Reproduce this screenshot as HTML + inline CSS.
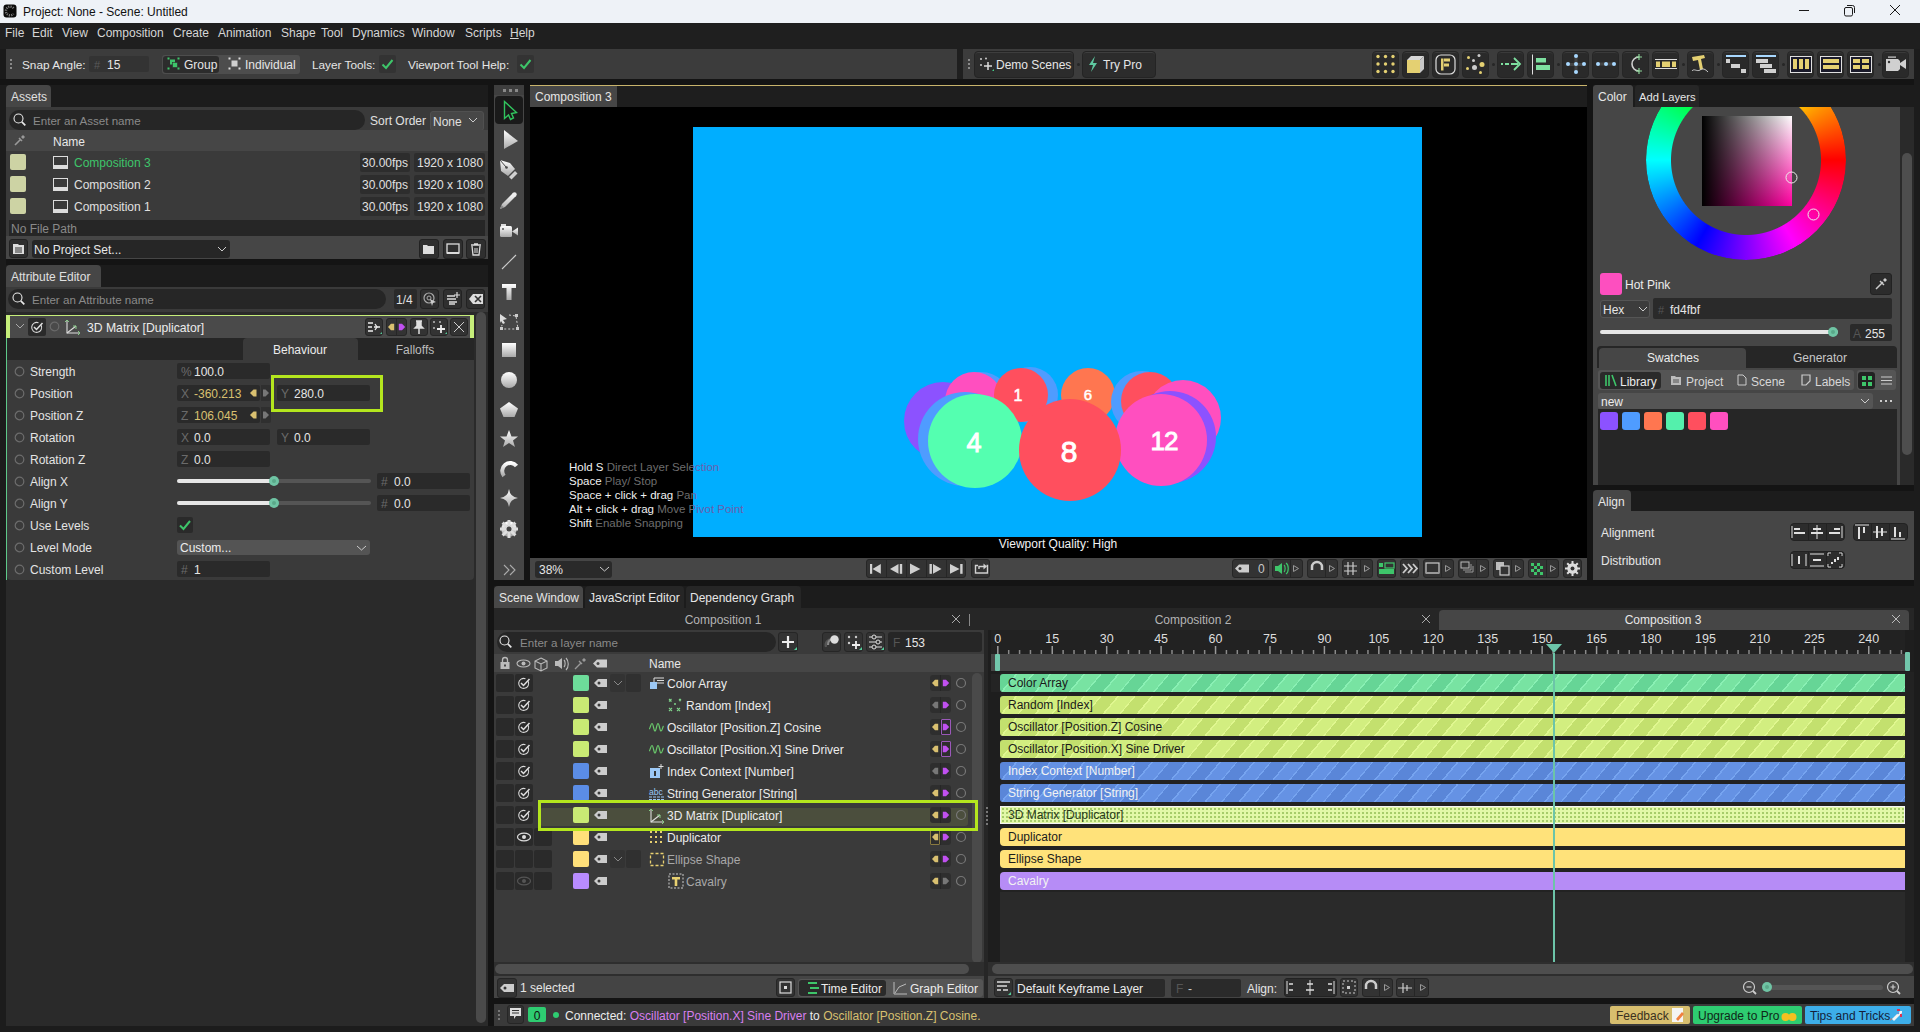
<!DOCTYPE html><html><head><meta charset="utf-8"><style>
html,body{margin:0;padding:0;width:1920px;height:1032px;overflow:hidden;background:#1c1c1c;}
body{position:relative;font-family:"Liberation Sans",sans-serif;font-size:12px;}
.a{position:absolute;}
.t{white-space:pre;}
svg.a{overflow:visible;}
</style></head><body>
<div class="a" style="left:0px;top:0px;width:1920px;height:1032px;background:#1c1c1c;"></div>
<div class="a" style="left:0px;top:0px;width:1920px;height:23px;background:#eef2f7;"></div>
<svg class="a" style="left:3px;top:4px;" width="14" height="14" viewBox="0 0 14 14"><rect x="0.5" y="0.5" width="13" height="13" rx="3" fill="#0a0a0a"/><path d="M10.5 4.2A4.3 4.3 0 1 0 10.5 9.8" stroke="#777" stroke-width="2.4" stroke-dasharray="1.2 1" fill="none"/></svg>
<div class="a t" style="left:23px;top:3.5px;height:16px;line-height:16px;font-size:12px;color:#111;">Project: None - Scene: Untitled</div>
<div class="a" style="left:1799px;top:10px;width:10px;height:1px;background:#1a1a1a;"></div>
<svg class="a" style="left:1843px;top:4px;" width="13" height="13" viewBox="0 0 13 13"><rect x="1.5" y="3.5" width="8" height="8.5" rx="1.5" fill="none" stroke="#1a1a1a" stroke-width="1"/><path d="M4 1.5H9.5A2 2 0 0 1 11.5 3.5V9" fill="none" stroke="#1a1a1a" stroke-width="1"/></svg>
<svg class="a" style="left:1889px;top:4px;" width="12" height="12" viewBox="0 0 12 12"><path d="M1 1L11 11M11 1L1 11" stroke="#1a1a1a" stroke-width="1"/></svg>
<div class="a" style="left:0px;top:23px;width:1920px;height:26px;background:#1f1f1f;"></div>
<div class="a t" style="left:5px;top:25px;height:16px;line-height:16px;font-size:12px;color:#d6d6d6;">File</div>
<div class="a t" style="left:32px;top:25px;height:16px;line-height:16px;font-size:12px;color:#d6d6d6;">Edit</div>
<div class="a t" style="left:62px;top:25px;height:16px;line-height:16px;font-size:12px;color:#d6d6d6;">View</div>
<div class="a t" style="left:97px;top:25px;height:16px;line-height:16px;font-size:12px;color:#d6d6d6;">Composition</div>
<div class="a t" style="left:173px;top:25px;height:16px;line-height:16px;font-size:12px;color:#d6d6d6;">Create</div>
<div class="a t" style="left:218px;top:25px;height:16px;line-height:16px;font-size:12px;color:#d6d6d6;">Animation</div>
<div class="a t" style="left:281px;top:25px;height:16px;line-height:16px;font-size:12px;color:#d6d6d6;">Shape</div>
<div class="a t" style="left:321px;top:25px;height:16px;line-height:16px;font-size:12px;color:#d6d6d6;">Tool</div>
<div class="a t" style="left:352px;top:25px;height:16px;line-height:16px;font-size:12px;color:#d6d6d6;">Dynamics</div>
<div class="a t" style="left:412px;top:25px;height:16px;line-height:16px;font-size:12px;color:#d6d6d6;">Window</div>
<div class="a t" style="left:465px;top:25px;height:16px;line-height:16px;font-size:12px;color:#d6d6d6;">Scripts</div>
<div class="a t" style="left:510px;top:25px;height:16px;line-height:16px;font-size:12px;color:#d6d6d6;"><u>H</u>elp</div>
<div class="a" style="left:0px;top:49px;width:6px;height:31px;background:#1a1a1a;"></div>
<div class="a" style="left:6px;top:49px;width:951px;height:30px;background:#3c3c3c;"></div>
<div class="a" style="left:957px;top:49px;width:6px;height:30px;background:#1f1f1f;"></div>
<div class="a" style="left:963px;top:49px;width:951px;height:30px;background:#3c3c3c;"></div>
<div class="a" style="left:0px;top:79px;width:1920px;height:6px;background:#141414;"></div>
<div class="a" style="left:10px;top:59px;width:2px;height:2px;background:#8a8a8a;"></div>
<div class="a" style="left:968px;top:59px;width:2px;height:2px;background:#8a8a8a;"></div>
<div class="a" style="left:10px;top:63px;width:2px;height:2px;background:#8a8a8a;"></div>
<div class="a" style="left:968px;top:63px;width:2px;height:2px;background:#8a8a8a;"></div>
<div class="a" style="left:10px;top:67px;width:2px;height:2px;background:#8a8a8a;"></div>
<div class="a" style="left:968px;top:67px;width:2px;height:2px;background:#8a8a8a;"></div>
<div class="a t" style="left:22px;top:57px;height:16px;line-height:16px;font-size:11.8px;color:#e6e6e6;">Snap Angle:</div>
<div class="a" style="left:89px;top:56px;width:60px;height:16px;background:#333333;border-radius:2px;"></div>
<div class="a t" style="left:94px;top:57px;height:16px;line-height:16px;font-size:11px;color:#5a5a5a;">#</div>
<div class="a t" style="left:107px;top:57px;height:16px;line-height:16px;font-size:12px;color:#e6e6e6;">15</div>
<div class="a" style="left:162px;top:55px;width:138px;height:19px;background:#4d4d4d;border-radius:3px;"></div>
<div class="a" style="left:163px;top:56px;width:56px;height:17px;background:#2c2c2c;border-radius:3px;"></div>
<svg class="a" style="left:167px;top:57px;" width="14" height="14" viewBox="0 0 14 14"><path d="M0.5 0.5h2v2h-2zM10.5 0.5h2v2h-2zM0.5 10.5h2v2h-2zM10.5 10.5h2v2h-2z" fill="#3ec56a"/><rect x="3" y="2.5" width="5" height="5" fill="#3ec56a"/><rect x="5.5" y="5.5" width="5" height="5" fill="#3ec56a" stroke="#2c2c2c" stroke-width="0.6"/></svg>
<div class="a t" style="left:184px;top:57px;height:16px;line-height:16px;font-size:12px;color:#e6e6e6;">Group</div>
<svg class="a" style="left:228px;top:57px;" width="14" height="14" viewBox="0 0 14 14"><path d="M0.5 0.5h2v2h-2zM10.5 0.5h2v2h-2zM0.5 10.5h2v2h-2zM10.5 10.5h2v2h-2z" fill="#ddd"/><rect x="3.5" y="3.5" width="6" height="6" fill="#d0d0d0"/></svg>
<div class="a t" style="left:245px;top:57px;height:16px;line-height:16px;font-size:12px;color:#e6e6e6;">Individual</div>
<div class="a t" style="left:312px;top:57px;height:16px;line-height:16px;font-size:11.8px;color:#e6e6e6;">Layer Tools:</div>
<div class="a" style="left:379px;top:55px;width:17px;height:18px;background:#333;border-radius:2px;"></div>
<svg class="a" style="left:380px;top:57px;" width="15" height="14" viewBox="0 0 15 14"><path d="M2.5 7.5L6 11L12.5 3" stroke="#3ec56a" stroke-width="2" fill="none"/></svg>
<div class="a t" style="left:408px;top:57px;height:16px;line-height:16px;font-size:11.8px;color:#e6e6e6;">Viewport Tool Help:</div>
<div class="a" style="left:517px;top:55px;width:17px;height:18px;background:#333;border-radius:2px;"></div>
<svg class="a" style="left:518px;top:57px;" width="15" height="14" viewBox="0 0 15 14"><path d="M2.5 7.5L6 11L12.5 3" stroke="#3ec56a" stroke-width="2" fill="none"/></svg>
<div class="a" style="left:974px;top:51px;width:100px;height:27px;background:#2c2c2c;border-radius:4px;border:1px solid #242424;box-sizing:border-box;box-shadow:inset 0 1px 0 #3e3e3e;"></div>
<svg class="a" style="left:979px;top:57px;" width="16" height="16" viewBox="0 0 16 16"><circle cx="2" cy="2" r="1" fill="#ccc"/><circle cx="7" cy="1.5" r="1" fill="#ccc"/><circle cx="2" cy="8" r="1" fill="#ccc"/><path d="M9 5v8M5 9h8" stroke="#ddd" stroke-width="1.5"/><path d="M13 14l2-2v2z" fill="#4c8"/></svg>
<div class="a t" style="left:996px;top:57px;height:16px;line-height:16px;font-size:12px;color:#e6e6e6;">Demo Scenes</div>
<div class="a" style="left:1082px;top:51px;width:74px;height:27px;background:#2c2c2c;border-radius:4px;border:1px solid #242424;box-sizing:border-box;box-shadow:inset 0 1px 0 #3e3e3e;"></div>
<div class="a" style="left:1077px;top:63px;width:3px;height:3px;background:#262626;border-radius:50%;"></div>
<svg class="a" style="left:1088px;top:56px;" width="10" height="16" viewBox="0 0 10 16"><path d="M7 0L1 9h4l-2 7 6-9H5z" fill="#5ec8a0"/></svg>
<div class="a t" style="left:1103px;top:57px;height:16px;line-height:16px;font-size:12px;color:#e6e6e6;">Try Pro</div>
<div class="a" style="left:1372px;top:51px;width:27px;height:27px;background:#2a2a2a;border-radius:4px;border:1px solid #262626;box-sizing:border-box;box-shadow:inset 0 1px 0 #3a3a3a;"></div>
<svg class="a" style="left:1372px;top:51px;" width="27" height="27" viewBox="0 0 27 27"><circle cx="6.0" cy="5.5" r="1.7" fill="#e4d072"/><circle cx="6.0" cy="13.0" r="1.7" fill="#e4d072"/><circle cx="6.0" cy="20.5" r="1.7" fill="#e4d072"/><circle cx="13.5" cy="5.5" r="1.7" fill="#e4d072"/><circle cx="13.5" cy="13.0" r="1.7" fill="#e4d072"/><circle cx="13.5" cy="20.5" r="1.7" fill="#e4d072"/><circle cx="21.0" cy="5.5" r="1.7" fill="#e4d072"/><circle cx="21.0" cy="13.0" r="1.7" fill="#e4d072"/><circle cx="21.0" cy="20.5" r="1.7" fill="#e4d072"/></svg>
<div class="a" style="left:1402px;top:51px;width:27px;height:27px;background:#2a2a2a;border-radius:4px;border:1px solid #262626;box-sizing:border-box;box-shadow:inset 0 1px 0 #3a3a3a;"></div>
<svg class="a" style="left:1402px;top:51px;" width="27" height="27" viewBox="0 0 27 27"><path d="M5 9l4-4h13l-4 4z" fill="#d8d8d8"/><path d="M18 9l4-4v13l-4 4z" fill="#c8c8c8"/><rect x="5" y="9" width="13" height="13" fill="#e4d072"/></svg>
<div class="a" style="left:1432px;top:51px;width:27px;height:27px;background:#2a2a2a;border-radius:4px;border:1px solid #262626;box-sizing:border-box;box-shadow:inset 0 1px 0 #3a3a3a;"></div>
<svg class="a" style="left:1432px;top:51px;" width="27" height="27" viewBox="0 0 27 27"><rect x="4" y="4" width="19" height="19" rx="5" fill="none" stroke="#dedede" stroke-width="1.2"/><path d="M9 7.5h2.5v12H9z M12 7.5h6v3h-6z M12 12.5h5v3h-5z" fill="#e4d072"/></svg>
<div class="a" style="left:1462px;top:51px;width:27px;height:27px;background:#2a2a2a;border-radius:4px;border:1px solid #262626;box-sizing:border-box;box-shadow:inset 0 1px 0 #3a3a3a;"></div>
<svg class="a" style="left:1462px;top:51px;" width="27" height="27" viewBox="0 0 27 27"><circle cx="6.5" cy="6.5" r="1.5" fill="#e4d072"/><circle cx="17" cy="4.5" r="1.5" fill="#ccc"/><circle cx="11.5" cy="9.5" r="1.5" fill="#ccc"/><circle cx="20" cy="13.5" r="2.5" fill="#e4d072"/><circle cx="5.5" cy="17.5" r="1.5" fill="#e4d072"/><circle cx="12.5" cy="16.5" r="2.5" fill="#ccc"/><circle cx="18.5" cy="21.5" r="1.5" fill="#e4d072"/></svg>
<div class="a" style="left:1492px;top:63px;width:3px;height:3px;background:#262626;border-radius:50%;"></div>
<div class="a" style="left:1497px;top:51px;width:27px;height:27px;background:#2a2a2a;border-radius:4px;border:1px solid #262626;box-sizing:border-box;box-shadow:inset 0 1px 0 #3a3a3a;"></div>
<svg class="a" style="left:1497px;top:51px;" width="27" height="27" viewBox="0 0 27 27"><path d="M4 13h2M8 13h4M14 13h7" stroke="#7ee0a0" stroke-width="1.8"/><path d="M17 7l6 6-6 6" stroke="#7ee0a0" stroke-width="1.8" fill="none"/></svg>
<div class="a" style="left:1527px;top:51px;width:27px;height:27px;background:#2a2a2a;border-radius:4px;border:1px solid #262626;box-sizing:border-box;box-shadow:inset 0 1px 0 #3a3a3a;"></div>
<svg class="a" style="left:1527px;top:51px;" width="27" height="27" viewBox="0 0 27 27"><path d="M5.5 3.5v20" stroke="#e0e0e0" stroke-width="1"/><rect x="9" y="7" width="10" height="4.5" fill="#7ee0a0"/><rect x="9" y="14" width="14" height="5" fill="#7ee0a0"/></svg>
<div class="a" style="left:1557px;top:63px;width:3px;height:3px;background:#262626;border-radius:50%;"></div>
<div class="a" style="left:1562px;top:51px;width:27px;height:27px;background:#2a2a2a;border-radius:4px;border:1px solid #262626;box-sizing:border-box;box-shadow:inset 0 1px 0 #3a3a3a;"></div>
<svg class="a" style="left:1562px;top:51px;" width="27" height="27" viewBox="0 0 27 27"><path d="M14 5v17M5.5 13.5h17" stroke="#444" stroke-width="3"/><circle cx="14" cy="5" r="2" fill="#a8d8ff"/><circle cx="6" cy="13" r="2" fill="#a8d8ff"/><circle cx="14" cy="13" r="2" fill="#a8d8ff"/><circle cx="22" cy="13" r="2" fill="#a8d8ff"/><circle cx="14" cy="21" r="2" fill="#a8d8ff"/></svg>
<div class="a" style="left:1592px;top:51px;width:27px;height:27px;background:#2a2a2a;border-radius:4px;border:1px solid #262626;box-sizing:border-box;box-shadow:inset 0 1px 0 #3a3a3a;"></div>
<svg class="a" style="left:1592px;top:51px;" width="27" height="27" viewBox="0 0 27 27"><path d="M6 13h16" stroke="#444" stroke-width="3"/><circle cx="6" cy="13" r="2" fill="#a8d8ff"/><circle cx="14" cy="13" r="2" fill="#a8d8ff"/><circle cx="22" cy="13" r="2" fill="#a8d8ff"/></svg>
<div class="a" style="left:1622px;top:51px;width:27px;height:27px;background:#2a2a2a;border-radius:4px;border:1px solid #262626;box-sizing:border-box;box-shadow:inset 0 1px 0 #3a3a3a;"></div>
<svg class="a" style="left:1622px;top:51px;" width="27" height="27" viewBox="0 0 27 27"><path d="M17 6a7 7 0 0 0 0 14" stroke="#d0d0d0" stroke-width="1.6" fill="none"/><path d="M17 3v6M14 6h6M17 17v6M14 20h6" stroke="#8ed89a" stroke-width="1.2"/></svg>
<div class="a" style="left:1652px;top:51px;width:27px;height:27px;background:#2a2a2a;border-radius:4px;border:1px solid #262626;box-sizing:border-box;box-shadow:inset 0 1px 0 #3a3a3a;"></div>
<svg class="a" style="left:1652px;top:51px;" width="27" height="27" viewBox="0 0 27 27"><path d="M3 8.5h22M3 17.5h22" stroke="#dedede" stroke-width="1"/><rect x="4" y="10.5" width="4" height="5.5" fill="#e4d072"/><rect x="10" y="10.5" width="8" height="5.5" fill="#e4d072"/><rect x="20" y="10.5" width="4" height="5.5" fill="#e4d072"/></svg>
<div class="a" style="left:1682px;top:63px;width:3px;height:3px;background:#262626;border-radius:50%;"></div>
<div class="a" style="left:1687px;top:51px;width:27px;height:27px;background:#2a2a2a;border-radius:4px;border:1px solid #262626;box-sizing:border-box;box-shadow:inset 0 1px 0 #3a3a3a;"></div>
<svg class="a" style="left:1687px;top:51px;" width="27" height="27" viewBox="0 0 27 27"><path d="M5 6l12-2 1 3-4 1 2 10-3 1-2-10-5 1z" fill="#e4d072"/><path d="M5 20c2-3 5 1 8-1s5-1 8 2" stroke="#ccc" stroke-width="1" fill="none"/></svg>
<div class="a" style="left:1717px;top:63px;width:3px;height:3px;background:#262626;border-radius:50%;"></div>
<div class="a" style="left:1722px;top:51px;width:27px;height:27px;background:#2a2a2a;border-radius:4px;border:1px solid #262626;box-sizing:border-box;box-shadow:inset 0 1px 0 #3a3a3a;"></div>
<svg class="a" style="left:1722px;top:51px;" width="27" height="27" viewBox="0 0 27 27"><rect x="4" y="4" width="20" height="2" fill="#a8d8ff"/><rect x="4" y="8" width="4" height="4" fill="#d0d0d0"/><rect x="9" y="13" width="9" height="4" fill="#d0d0d0"/><rect x="19" y="18" width="5" height="4" fill="#d0d0d0"/></svg>
<div class="a" style="left:1752px;top:51px;width:27px;height:27px;background:#2a2a2a;border-radius:4px;border:1px solid #262626;box-sizing:border-box;box-shadow:inset 0 1px 0 #3a3a3a;"></div>
<svg class="a" style="left:1752px;top:51px;" width="27" height="27" viewBox="0 0 27 27"><rect x="4" y="4" width="20" height="2" fill="#a8d8ff"/><rect x="4" y="8" width="12" height="4" fill="#d0d0d0"/><rect x="8" y="13" width="12" height="4" fill="#d0d0d0"/><rect x="12" y="18" width="12" height="4" fill="#d0d0d0"/></svg>
<div class="a" style="left:1782px;top:63px;width:3px;height:3px;background:#262626;border-radius:50%;"></div>
<div class="a" style="left:1787px;top:51px;width:27px;height:27px;background:#2a2a2a;border-radius:4px;border:1px solid #262626;box-sizing:border-box;box-shadow:inset 0 1px 0 #3a3a3a;"></div>
<svg class="a" style="left:1787px;top:51px;" width="27" height="27" viewBox="0 0 27 27"><rect x="3.5" y="5.5" width="21" height="16" fill="#1a1a2a" stroke="#e0e0e0" stroke-width="1"/><rect x="6" y="8" width="4" height="10" fill="#e4d072"/><rect x="12" y="8" width="4" height="10" fill="#e4d072"/><rect x="18" y="8" width="4" height="10" fill="#e4d072"/></svg>
<div class="a" style="left:1817px;top:51px;width:27px;height:27px;background:#2a2a2a;border-radius:4px;border:1px solid #262626;box-sizing:border-box;box-shadow:inset 0 1px 0 #3a3a3a;"></div>
<svg class="a" style="left:1817px;top:51px;" width="27" height="27" viewBox="0 0 27 27"><rect x="3.5" y="5.5" width="21" height="16" fill="#1a1a2a" stroke="#e0e0e0" stroke-width="1"/><rect x="6" y="8" width="16" height="4" fill="#e4d072"/><rect x="6" y="14" width="16" height="4" fill="#e4d072"/></svg>
<div class="a" style="left:1847px;top:51px;width:27px;height:27px;background:#2a2a2a;border-radius:4px;border:1px solid #262626;box-sizing:border-box;box-shadow:inset 0 1px 0 #3a3a3a;"></div>
<svg class="a" style="left:1847px;top:51px;" width="27" height="27" viewBox="0 0 27 27"><rect x="3.5" y="5.5" width="21" height="16" fill="#1a1a2a" stroke="#e0e0e0" stroke-width="1"/><rect x="6" y="8" width="7" height="4" fill="#e4d072"/><rect x="15" y="8" width="7" height="4" fill="#e4d072"/><rect x="6" y="14" width="7" height="4" fill="#e4d072"/><rect x="15" y="14" width="7" height="4" fill="#e4d072"/></svg>
<div class="a" style="left:1878px;top:63px;width:3px;height:3px;background:#262626;border-radius:50%;"></div>
<div class="a" style="left:1882px;top:51px;width:27px;height:27px;background:#2a2a2a;border-radius:4px;border:1px solid #262626;box-sizing:border-box;box-shadow:inset 0 1px 0 #3a3a3a;"></div>
<svg class="a" style="left:1882px;top:51px;" width="27" height="27" viewBox="0 0 27 27"><path d="M4 8h12l2 2v8l-2 2H4z" fill="#d0d0d0"/><path d="M18 12l6-4v10l-6-4z" fill="#d0d0d0"/><rect x="6" y="5.5" width="8" height="1.2" fill="#d0d0d0"/><circle cx="7" cy="11" r="1.2" fill="#333"/></svg>
<div class="a" style="left:0px;top:85px;width:6px;height:947px;background:#1c1c1c;"></div>
<div class="a" style="left:6px;top:85px;width:482px;height:22px;background:#1c1c1c;"></div>
<div class="a" style="left:6px;top:85px;width:45px;height:22px;background:#464646;border-radius:4px 4px 0 0;"></div>
<div class="a t" style="left:11px;top:89px;height:16px;line-height:16px;font-size:12px;color:#e0e0e0;">Assets</div>
<div class="a" style="left:6px;top:107px;width:482px;height:152px;background:#3a3a3a;"></div>
<div class="a" style="left:9px;top:110px;width:356px;height:20px;background:#262626;border-radius:10px;"></div>
<svg class="a" style="left:13px;top:113px;" width="14" height="14" viewBox="0 0 14 14"><circle cx="5.5" cy="5.5" r="4.5" fill="none" stroke="#e8e8e8" stroke-width="1.1"/><path d="M8.8 8.8l3.5 3.5" stroke="#e8e8e8" stroke-width="1.7"/></svg>
<div class="a t" style="left:33px;top:113px;height:16px;line-height:16px;font-size:11.6px;color:#8a8a8a;">Enter an Asset name</div>
<div class="a t" style="left:370px;top:113px;height:16px;line-height:16px;font-size:12px;color:#e0e0e0;">Sort Order</div>
<div class="a" style="left:430px;top:111px;width:54px;height:20px;background:#474747;border-radius:3px;border:1px solid #505050;box-sizing:border-box;"></div>
<div class="a t" style="left:433px;top:114px;height:16px;line-height:16px;font-size:12px;color:#e0e0e0;">None</div>
<svg class="a" style="left:468px;top:117px;" width="10" height="6" viewBox="0 0 10 6"><path d="M1 1l4 4 4-4" stroke="#ccc" fill="none" stroke-width="1"/></svg>
<div class="a" style="left:6px;top:130px;width:482px;height:21px;background:#464646;"></div>
<svg class="a" style="left:13px;top:134px;" width="13" height="13" viewBox="0 0 13 13"><path d="M2 11l6-6M6 4l3 3" stroke="#999" stroke-width="1.6"/><path d="M8 3l2-2 2 2-2 2z" fill="#999"/></svg>
<div class="a t" style="left:53px;top:134px;height:16px;line-height:16px;font-size:12px;color:#e8e8e8;">Name</div>
<div class="a" style="left:10px;top:154px;width:16px;height:16px;background:#cdd3a4;border-radius:2px;"></div>
<svg class="a" style="left:53px;top:156px;" width="15" height="13" viewBox="0 0 15 13"><rect x="0.5" y="0.5" width="14" height="9" fill="none" stroke="#ddd"/><rect x="0" y="10" width="15" height="3" fill="#ddd"/></svg>
<div class="a t" style="left:74px;top:155px;height:16px;line-height:16px;font-size:12px;color:#3ec56a;">Composition 3</div>
<div class="a" style="left:360px;top:153px;width:50px;height:19px;background:#2d2d2d;border-radius:2px;"></div>
<div class="a t" style="left:362px;top:155px;height:16px;line-height:16px;font-size:12px;color:#e0e0e0;">30.00fps</div>
<div class="a" style="left:414px;top:153px;width:71px;height:19px;background:#2d2d2d;border-radius:2px;"></div>
<div class="a t" style="left:417px;top:155px;height:16px;line-height:16px;font-size:12px;color:#e0e0e0;">1920 x 1080</div>
<div class="a" style="left:10px;top:176px;width:16px;height:16px;background:#cdd3a4;border-radius:2px;"></div>
<svg class="a" style="left:53px;top:178px;" width="15" height="13" viewBox="0 0 15 13"><rect x="0.5" y="0.5" width="14" height="9" fill="none" stroke="#ddd"/><rect x="0" y="10" width="15" height="3" fill="#ddd"/></svg>
<div class="a t" style="left:74px;top:177px;height:16px;line-height:16px;font-size:12px;color:#e0e0e0;">Composition 2</div>
<div class="a" style="left:360px;top:175px;width:50px;height:19px;background:#2d2d2d;border-radius:2px;"></div>
<div class="a t" style="left:362px;top:177px;height:16px;line-height:16px;font-size:12px;color:#e0e0e0;">30.00fps</div>
<div class="a" style="left:414px;top:175px;width:71px;height:19px;background:#2d2d2d;border-radius:2px;"></div>
<div class="a t" style="left:417px;top:177px;height:16px;line-height:16px;font-size:12px;color:#e0e0e0;">1920 x 1080</div>
<div class="a" style="left:10px;top:198px;width:16px;height:16px;background:#cdd3a4;border-radius:2px;"></div>
<svg class="a" style="left:53px;top:200px;" width="15" height="13" viewBox="0 0 15 13"><rect x="0.5" y="0.5" width="14" height="9" fill="none" stroke="#ddd"/><rect x="0" y="10" width="15" height="3" fill="#ddd"/></svg>
<div class="a t" style="left:74px;top:199px;height:16px;line-height:16px;font-size:12px;color:#e0e0e0;">Composition 1</div>
<div class="a" style="left:360px;top:197px;width:50px;height:19px;background:#2d2d2d;border-radius:2px;"></div>
<div class="a t" style="left:362px;top:199px;height:16px;line-height:16px;font-size:12px;color:#e0e0e0;">30.00fps</div>
<div class="a" style="left:414px;top:197px;width:71px;height:19px;background:#2d2d2d;border-radius:2px;"></div>
<div class="a t" style="left:417px;top:199px;height:16px;line-height:16px;font-size:12px;color:#e0e0e0;">1920 x 1080</div>
<div class="a" style="left:6px;top:217px;width:482px;height:3px;background:#3a3a3a;"></div>
<div class="a" style="left:9px;top:220px;width:476px;height:16px;background:#262626;"></div>
<div class="a" style="left:6px;top:236px;width:482px;height:23px;background:#464646;"></div>
<div class="a t" style="left:11px;top:221px;height:16px;line-height:16px;font-size:12px;color:#8a8a8a;">No File Path</div>
<div class="a" style="left:9px;top:239px;width:19px;height:19px;background:#2f2f2f;border-radius:3px;border:1px solid #222;box-sizing:border-box;"></div>
<svg class="a" style="left:12px;top:242px;" width="13" height="13" viewBox="0 0 13 13"><path d="M1 2h5l1 1h5v9H1z" fill="#ddd"/><path d="M3 6h7M3 8h7M3 10h7" stroke="#333" stroke-width="1"/></svg>
<div class="a" style="left:32px;top:240px;width:198px;height:18px;background:#262626;border-radius:3px;"></div>
<div class="a t" style="left:34px;top:242px;height:16px;line-height:16px;font-size:12px;color:#e8e8e8;">No Project Set...</div>
<svg class="a" style="left:217px;top:246px;" width="10" height="6" viewBox="0 0 10 6"><path d="M1 1l4 4 4-4" stroke="#ccc" fill="none" stroke-width="1"/></svg>
<div class="a" style="left:419px;top:239px;width:20px;height:20px;background:#2f2f2f;border-radius:3px;border:1px solid #222;box-sizing:border-box;"></div>
<svg class="a" style="left:420px;top:240px;" width="18" height="18" viewBox="0 0 18 18"><path d="M3 5h4l1 1h6v8H3z" fill="#ddd"/></svg>
<div class="a" style="left:443px;top:239px;width:20px;height:20px;background:#2f2f2f;border-radius:3px;border:1px solid #222;box-sizing:border-box;"></div>
<svg class="a" style="left:444px;top:240px;" width="18" height="18" viewBox="0 0 18 18"><rect x="3" y="4" width="12" height="9" fill="none" stroke="#ddd" stroke-width="1.3"/><rect x="3" y="12" width="12" height="2" fill="#ddd"/></svg>
<div class="a" style="left:466px;top:239px;width:20px;height:20px;background:#2f2f2f;border-radius:3px;border:1px solid #222;box-sizing:border-box;"></div>
<svg class="a" style="left:467px;top:240px;" width="18" height="18" viewBox="0 0 18 18"><path d="M4 5h10M7 4h4M5 6l1 9h6l1-9" stroke="#ddd" stroke-width="1.3" fill="none"/><path d="M8 8v5M10 8v5" stroke="#ddd"/></svg>
<div class="a" style="left:6px;top:259px;width:482px;height:6px;background:#141414;"></div>
<div class="a" style="left:6px;top:265px;width:482px;height:22px;background:#1c1c1c;"></div>
<div class="a" style="left:6px;top:265px;width:95px;height:22px;background:#464646;border-radius:4px 4px 0 0;"></div>
<div class="a t" style="left:11px;top:269px;height:16px;line-height:16px;font-size:12px;color:#e0e0e0;">Attribute Editor</div>
<div class="a" style="left:6px;top:287px;width:482px;height:25px;background:#3a3a3a;"></div>
<div class="a" style="left:8px;top:289px;width:378px;height:20px;background:#262626;border-radius:10px;"></div>
<svg class="a" style="left:12px;top:292px;" width="14" height="14" viewBox="0 0 14 14"><circle cx="5.5" cy="5.5" r="4.5" fill="none" stroke="#e8e8e8" stroke-width="1.1"/><path d="M8.8 8.8l3.5 3.5" stroke="#e8e8e8" stroke-width="1.7"/></svg>
<div class="a t" style="left:32px;top:292px;height:16px;line-height:16px;font-size:11.6px;color:#8a8a8a;">Enter an Attribute name</div>
<div class="a" style="left:394px;top:289px;width:23px;height:20px;background:#2a2a2a;border-radius:2px;"></div>
<div class="a t" style="left:396px;top:292px;height:16px;line-height:16px;font-size:12px;color:#e0e0e0;">1/4</div>
<div class="a" style="left:420px;top:289px;width:19px;height:20px;background:#2f2f2f;border-radius:3px;border:1px solid #222;box-sizing:border-box;"></div>
<div class="a" style="left:443px;top:289px;width:19px;height:20px;background:#2f2f2f;border-radius:3px;border:1px solid #222;box-sizing:border-box;"></div>
<div class="a" style="left:466px;top:289px;width:19px;height:20px;background:#2f2f2f;border-radius:3px;border:1px solid #222;box-sizing:border-box;"></div>
<svg class="a" style="left:422px;top:291px;" width="16" height="16" viewBox="0 0 16 16"><circle cx="7" cy="7" r="5" fill="none" stroke="#aaa" stroke-width="1.2"/><circle cx="7" cy="7" r="2" fill="none" stroke="#aaa"/><path d="M8 8l6 3-3 1-1 3z" fill="#ccc"/></svg>
<svg class="a" style="left:445px;top:291px;" width="16" height="16" viewBox="0 0 16 16"><path d="M2 5h8M2 8h9M4 11h8M4 13h6" stroke="#ddd" stroke-width="1.6"/><path d="M12 1v6M9 4h6" stroke="#ddd" stroke-width="1.2"/></svg>
<svg class="a" style="left:468px;top:292px;" width="16" height="14" viewBox="0 0 16 14"><path d="M5 2h10v10H5L1 7z" fill="#ddd"/><path d="M7 4l6 6M13 4l-6 6" stroke="#333" stroke-width="1.6"/></svg>
<div class="a" style="left:6px;top:312px;width:482px;height:714px;background:#2a2a2a;"></div>
<div class="a" style="left:476px;top:312px;width:10px;height:711px;background:#4a4a4a;border-radius:5px;"></div>
<div class="a" style="left:6px;top:315px;width:468px;height:23px;background:#4a4a4a;"></div>
<div class="a" style="left:6px;top:315px;width:468px;height:1px;background:#c6ee7a;"></div>
<div class="a" style="left:6px;top:315px;width:4px;height:23px;background:#c6ee7a;"></div>
<div class="a" style="left:470px;top:315px;width:4px;height:23px;background:#c6ee7a;"></div>
<svg class="a" style="left:15px;top:323px;" width="10" height="6" viewBox="0 0 10 6"><path d="M1 1l4 4 4-4" stroke="#aaa" fill="none" stroke-width="1"/></svg>
<div class="a" style="left:28px;top:318px;width:18px;height:18px;background:#2a2a2a;border-radius:2px;"></div>
<svg class="a" style="left:29px;top:319px;" width="16" height="16" viewBox="0 0 16 16"><path d="M12.2 6.2A5 5 0 1 1 9.5 3.7" stroke="#d8d8d8" stroke-width="1.1" fill="none"/><path d="M5 8l2.5 2.5L13.5 4" stroke="#e0e0e0" stroke-width="1.5" fill="none"/></svg>
<svg class="a" style="left:49px;top:321px;" width="11" height="11" viewBox="0 0 11 11"><circle cx="5.5" cy="5.5" r="4.3" fill="none" stroke="#6a6a6a" stroke-width="1.2"/></svg>
<svg class="a" style="left:64px;top:318px;" width="18" height="18" viewBox="0 0 18 18"><path d="M3 2v13h13" stroke="#ddd" stroke-width="1.1" fill="none"/><path d="M3 15l9-7" stroke="#ddd" stroke-width="1.1"/><path d="M1 4l2-2 2 2" stroke="#8c8" fill="none"/><path d="M14 13l2 2-2 2" stroke="#8c8" fill="none"/><path d="M9 8h3v3" stroke="#8c8" fill="none"/></svg>
<div class="a t" style="left:87px;top:320px;height:16px;line-height:16px;font-size:12.2px;color:#ececec;">3D Matrix [Duplicator]</div>
<div class="a" style="left:365px;top:318px;width:18px;height:18px;background:#333;border-radius:3px;border:1px solid #262626;box-sizing:border-box;"></div>
<svg class="a" style="left:365px;top:318px;" width="18" height="18" viewBox="0 0 18 18"><path d="M3 5h5M3 9h4M3 13h5M9 9h6" stroke="#eee" stroke-width="1.6"/><path d="M10 6l2 3-2 3" stroke="#eee" fill="none" stroke-width="1.3"/><path d="M15 16l2-2v2z" fill="#5c9"/></svg>
<div class="a" style="left:386px;top:318px;width:21px;height:18px;background:#333;border-radius:3px;border:1px solid #262626;box-sizing:border-box;"></div>
<svg class="a" style="left:386px;top:318px;" width="21" height="18" viewBox="0 0 21 18"><path d="M2 9L5 5.8H8.2V12.2H5Z" fill="#d9c070"/><path d="M12.8 5.8H16L19.2 9L16 12.2H12.8Z" fill="#c050f0"/><path d="M10.5 1v16" stroke="#262626"/></svg>
<div class="a" style="left:410px;top:318px;width:18px;height:18px;background:#333;border-radius:3px;border:1px solid #262626;box-sizing:border-box;"></div>
<svg class="a" style="left:410px;top:318px;" width="18" height="18" viewBox="0 0 18 18"><path d="M6 3h6M7 3v5l-2 2h8l-2-2V3M9 10v6" stroke="#ddd" stroke-width="1.5" fill="#ddd"/></svg>
<div class="a" style="left:430px;top:318px;width:18px;height:18px;background:#333;border-radius:3px;border:1px solid #262626;box-sizing:border-box;"></div>
<svg class="a" style="left:430px;top:318px;" width="18" height="18" viewBox="0 0 18 18"><circle cx="4" cy="4" r="1" fill="#bbb"/><circle cx="10" cy="4" r="1" fill="#bbb"/><circle cx="4" cy="10" r="1" fill="#bbb"/><path d="M11 7v8M7 11h8" stroke="#eee" stroke-width="1.8"/><path d="M15 16l2-2v2z" fill="#5c9"/></svg>
<div class="a" style="left:450px;top:318px;width:18px;height:18px;background:#333;border-radius:3px;border:1px solid #262626;box-sizing:border-box;"></div>
<svg class="a" style="left:450px;top:318px;" width="18" height="18" viewBox="0 0 18 18"><path d="M4 4l10 10M14 4L4 14" stroke="#ccc" stroke-width="1"/></svg>
<div class="a" style="left:6px;top:338px;width:1px;height:242px;background:#5ec98a;"></div>
<div class="a" style="left:7px;top:338px;width:467px;height:22px;background:#262626;"></div>
<div class="a" style="left:243px;top:338px;width:115px;height:22px;background:#3a3a3a;border-radius:4px 4px 0 0;"></div>
<div class="a t" style="left:150.0px;top:342px;height:16px;line-height:16px;font-size:12px;color:#ececec;width:300px;text-align:center;">Behaviour</div>
<div class="a t" style="left:265.0px;top:342px;height:16px;line-height:16px;font-size:12px;color:#bdbdbd;width:300px;text-align:center;">Falloffs</div>
<div class="a" style="left:7px;top:360px;width:467px;height:220px;background:#3a3a3a;border-radius:0 0 4px 4px;"></div>
<svg class="a" style="left:14px;top:366px;" width="11" height="11" viewBox="0 0 11 11"><circle cx="5.5" cy="5.5" r="4.3" fill="none" stroke="#6c6c6c" stroke-width="1.2"/></svg>
<div class="a t" style="left:30px;top:364px;height:16px;line-height:16px;font-size:12px;color:#e4e4e4;">Strength</div>
<svg class="a" style="left:14px;top:388px;" width="11" height="11" viewBox="0 0 11 11"><circle cx="5.5" cy="5.5" r="4.3" fill="none" stroke="#6c6c6c" stroke-width="1.2"/></svg>
<div class="a t" style="left:30px;top:386px;height:16px;line-height:16px;font-size:12px;color:#e4e4e4;">Position</div>
<svg class="a" style="left:14px;top:410px;" width="11" height="11" viewBox="0 0 11 11"><circle cx="5.5" cy="5.5" r="4.3" fill="none" stroke="#6c6c6c" stroke-width="1.2"/></svg>
<div class="a t" style="left:30px;top:408px;height:16px;line-height:16px;font-size:12px;color:#e4e4e4;">Position Z</div>
<svg class="a" style="left:14px;top:432px;" width="11" height="11" viewBox="0 0 11 11"><circle cx="5.5" cy="5.5" r="4.3" fill="none" stroke="#6c6c6c" stroke-width="1.2"/></svg>
<div class="a t" style="left:30px;top:430px;height:16px;line-height:16px;font-size:12px;color:#e4e4e4;">Rotation</div>
<svg class="a" style="left:14px;top:454px;" width="11" height="11" viewBox="0 0 11 11"><circle cx="5.5" cy="5.5" r="4.3" fill="none" stroke="#6c6c6c" stroke-width="1.2"/></svg>
<div class="a t" style="left:30px;top:452px;height:16px;line-height:16px;font-size:12px;color:#e4e4e4;">Rotation Z</div>
<svg class="a" style="left:14px;top:476px;" width="11" height="11" viewBox="0 0 11 11"><circle cx="5.5" cy="5.5" r="4.3" fill="none" stroke="#6c6c6c" stroke-width="1.2"/></svg>
<div class="a t" style="left:30px;top:474px;height:16px;line-height:16px;font-size:12px;color:#e4e4e4;">Align X</div>
<svg class="a" style="left:14px;top:498px;" width="11" height="11" viewBox="0 0 11 11"><circle cx="5.5" cy="5.5" r="4.3" fill="none" stroke="#6c6c6c" stroke-width="1.2"/></svg>
<div class="a t" style="left:30px;top:496px;height:16px;line-height:16px;font-size:12px;color:#e4e4e4;">Align Y</div>
<svg class="a" style="left:14px;top:520px;" width="11" height="11" viewBox="0 0 11 11"><circle cx="5.5" cy="5.5" r="4.3" fill="none" stroke="#6c6c6c" stroke-width="1.2"/></svg>
<div class="a t" style="left:30px;top:518px;height:16px;line-height:16px;font-size:12px;color:#e4e4e4;">Use Levels</div>
<svg class="a" style="left:14px;top:542px;" width="11" height="11" viewBox="0 0 11 11"><circle cx="5.5" cy="5.5" r="4.3" fill="none" stroke="#6c6c6c" stroke-width="1.2"/></svg>
<div class="a t" style="left:30px;top:540px;height:16px;line-height:16px;font-size:12px;color:#e4e4e4;">Level Mode</div>
<svg class="a" style="left:14px;top:564px;" width="11" height="11" viewBox="0 0 11 11"><circle cx="5.5" cy="5.5" r="4.3" fill="none" stroke="#6c6c6c" stroke-width="1.2"/></svg>
<div class="a t" style="left:30px;top:562px;height:16px;line-height:16px;font-size:12px;color:#e4e4e4;">Custom Level</div>
<div class="a" style="left:177px;top:363px;width:93px;height:16px;background:#2a2a2a;border-radius:2px;"></div>
<div class="a t" style="left:181px;top:364px;height:16px;line-height:16px;font-size:12px;color:#6a6a6a;">%</div>
<div class="a t" style="left:194px;top:364px;height:16px;line-height:16px;font-size:12px;color:#e6e6e6;">100.0</div>
<div class="a" style="left:177px;top:385px;width:83px;height:16px;background:#2a2a2a;border-radius:2px;"></div>
<div class="a t" style="left:181px;top:386px;height:16px;line-height:16px;font-size:12px;color:#6a6a6a;">X</div>
<div class="a t" style="left:194px;top:386px;height:16px;line-height:16px;font-size:12px;color:#d9c070;">-360.213</div>
<div class="a" style="left:261px;top:385px;width:10px;height:16px;background:#2f2f2f;border-radius:0 2px 2px 0;"></div>
<svg class="a" style="left:244px;top:388px;" width="30" height="10" viewBox="0 0 30 10"><path d="M6 5l3.5-3.5h3v7h-3z" fill="#d9c070"/><path d="M19 1.5h2.5l3.5 3.5-3.5 3.5H19z" fill="#777"/></svg>
<div class="a" style="left:277px;top:385px;width:93px;height:16px;background:#2a2a2a;border-radius:2px;"></div>
<div class="a t" style="left:281px;top:386px;height:16px;line-height:16px;font-size:12px;color:#6a6a6a;">Y</div>
<div class="a t" style="left:294px;top:386px;height:16px;line-height:16px;font-size:12px;color:#e6e6e6;">280.0</div>
<div class="a" style="left:271px;top:375px;width:112px;height:37px;border:3px solid #b4e61e;box-sizing:border-box;"></div>
<div class="a" style="left:177px;top:407px;width:83px;height:16px;background:#2a2a2a;border-radius:2px;"></div>
<div class="a t" style="left:181px;top:408px;height:16px;line-height:16px;font-size:12px;color:#6a6a6a;">Z</div>
<div class="a t" style="left:194px;top:408px;height:16px;line-height:16px;font-size:12px;color:#d9c070;">106.045</div>
<div class="a" style="left:261px;top:407px;width:10px;height:16px;background:#2f2f2f;border-radius:0 2px 2px 0;"></div>
<svg class="a" style="left:244px;top:410px;" width="30" height="10" viewBox="0 0 30 10"><path d="M6 5l3.5-3.5h3v7h-3z" fill="#d9c070"/><path d="M19 1.5h2.5l3.5 3.5-3.5 3.5H19z" fill="#777"/></svg>
<div class="a" style="left:177px;top:429px;width:93px;height:16px;background:#2a2a2a;border-radius:2px;"></div>
<div class="a t" style="left:181px;top:430px;height:16px;line-height:16px;font-size:12px;color:#6a6a6a;">X</div>
<div class="a t" style="left:194px;top:430px;height:16px;line-height:16px;font-size:12px;color:#e6e6e6;">0.0</div>
<div class="a" style="left:277px;top:429px;width:93px;height:16px;background:#2a2a2a;border-radius:2px;"></div>
<div class="a t" style="left:281px;top:430px;height:16px;line-height:16px;font-size:12px;color:#6a6a6a;">Y</div>
<div class="a t" style="left:294px;top:430px;height:16px;line-height:16px;font-size:12px;color:#e6e6e6;">0.0</div>
<div class="a" style="left:177px;top:451px;width:93px;height:16px;background:#2a2a2a;border-radius:2px;"></div>
<div class="a t" style="left:181px;top:452px;height:16px;line-height:16px;font-size:12px;color:#6a6a6a;">Z</div>
<div class="a t" style="left:194px;top:452px;height:16px;line-height:16px;font-size:12px;color:#e6e6e6;">0.0</div>
<div class="a" style="left:177px;top:479px;width:194px;height:4px;background:#555;border-radius:2px;"></div>
<div class="a" style="left:177px;top:479px;width:97px;height:4px;background:#e6e6e6;border-radius:2px;"></div>
<svg class="a" style="left:268px;top:475px;" width="12" height="12" viewBox="0 0 12 12"><circle cx="6" cy="6" r="5" fill="#6fc4a4"/><circle cx="6" cy="6" r="2" fill="#5aa88a"/></svg>
<div class="a" style="left:377px;top:473px;width:93px;height:16px;background:#2a2a2a;border-radius:2px;"></div>
<div class="a t" style="left:381px;top:474px;height:16px;line-height:16px;font-size:12px;color:#6a6a6a;">#</div>
<div class="a t" style="left:394px;top:474px;height:16px;line-height:16px;font-size:12px;color:#e6e6e6;">0.0</div>
<div class="a" style="left:177px;top:501px;width:194px;height:4px;background:#555;border-radius:2px;"></div>
<div class="a" style="left:177px;top:501px;width:97px;height:4px;background:#e6e6e6;border-radius:2px;"></div>
<svg class="a" style="left:268px;top:497px;" width="12" height="12" viewBox="0 0 12 12"><circle cx="6" cy="6" r="5" fill="#6fc4a4"/><circle cx="6" cy="6" r="2" fill="#5aa88a"/></svg>
<div class="a" style="left:377px;top:495px;width:93px;height:16px;background:#2a2a2a;border-radius:2px;"></div>
<div class="a t" style="left:381px;top:496px;height:16px;line-height:16px;font-size:12px;color:#6a6a6a;">#</div>
<div class="a t" style="left:394px;top:496px;height:16px;line-height:16px;font-size:12px;color:#e6e6e6;">0.0</div>
<div class="a" style="left:177px;top:517px;width:16px;height:16px;background:#2a2a2a;border-radius:2px;"></div>
<svg class="a" style="left:177px;top:517px;" width="16" height="16" viewBox="0 0 16 16"><path d="M3 8.5L6.5 12L13 4" stroke="#3ec56a" stroke-width="2" fill="none"/></svg>
<div class="a" style="left:177px;top:540px;width:193px;height:15px;background:#545454;border-radius:3px;"></div>
<div class="a t" style="left:180px;top:540px;height:16px;line-height:16px;font-size:12px;color:#ececec;">Custom...</div>
<svg class="a" style="left:356px;top:545px;" width="11" height="6" viewBox="0 0 11 6"><path d="M1 1l4.5 4 4.5-4" stroke="#ccc" fill="none" stroke-width="1"/></svg>
<div class="a" style="left:177px;top:561px;width:93px;height:16px;background:#2a2a2a;border-radius:2px;"></div>
<div class="a t" style="left:181px;top:562px;height:16px;line-height:16px;font-size:12px;color:#6a6a6a;">#</div>
<div class="a t" style="left:194px;top:562px;height:16px;line-height:16px;font-size:12px;color:#e6e6e6;">1</div>
<div class="a" style="left:488px;top:85px;width:6px;height:947px;background:#141414;"></div>
<div class="a" style="left:524px;top:85px;width:6px;height:495px;background:#141414;"></div>
<div class="a" style="left:494px;top:85px;width:30px;height:495px;background:#464646;"></div>
<div class="a" style="left:494px;top:85px;width:30px;height:10px;background:#3e3e3e;"></div>
<div class="a" style="left:503px;top:89px;width:3px;height:3px;background:#888;"></div>
<div class="a" style="left:509px;top:89px;width:3px;height:3px;background:#888;"></div>
<div class="a" style="left:515px;top:89px;width:3px;height:3px;background:#888;"></div>
<div class="a" style="left:495px;top:96px;width:28px;height:28px;background:#1a1a1a;border-radius:4px;"></div>
<svg class="a" style="left:495px;top:96px;" width="28" height="28" viewBox="0 0 28 28"><path d="M9.5 5.5L21.5 16.5L16.5 17.5L18.5 22L15.5 23.5L13.5 19L9.5 22.5Z" fill="none" stroke="#31c45e" stroke-width="1.4" stroke-linejoin="miter"/></svg>
<svg class="a" style="left:495px;top:130px;" width="28" height="24" viewBox="0 0 28 24"><defs><linearGradient id="tg" x1="0" y1="0" x2="0" y2="1"><stop offset="0" stop-color="#ffffff"/><stop offset="1" stop-color="#a9a9a9"/></linearGradient></defs><path d="M9 0L23 11L9 19Z" fill="url(#tg)"/></svg>
<svg class="a" style="left:495px;top:160px;" width="28" height="24" viewBox="0 0 28 24"><defs><linearGradient id="tg" x1="0" y1="0" x2="0" y2="1"><stop offset="0" stop-color="#ffffff"/><stop offset="1" stop-color="#a9a9a9"/></linearGradient></defs><path d="M5 0L15 3L20 9L13 16L6 11Z" fill="url(#tg)"/><path d="M5 0L11 7" stroke="#464646" stroke-width="1"/><circle cx="11.5" cy="7.5" r="1.3" fill="#464646"/><path d="M14 17l6-6 2.5 2.5-6 6z" fill="#d0d0d0"/></svg>
<svg class="a" style="left:495px;top:190px;" width="28" height="24" viewBox="0 0 28 24"><defs><linearGradient id="tg" x1="0" y1="0" x2="0" y2="1"><stop offset="0" stop-color="#ffffff"/><stop offset="1" stop-color="#a9a9a9"/></linearGradient></defs><path d="M5 19l2-5L18 3l3 3L10 17z" fill="url(#tg)"/><path d="M5 19l1.5-4 2.5 2.5z" fill="#888"/><circle cx="19.5" cy="4.5" r="2.2" fill="#eee"/></svg>
<svg class="a" style="left:495px;top:222px;" width="28" height="24" viewBox="0 0 28 24"><defs><linearGradient id="tg" x1="0" y1="0" x2="0" y2="1"><stop offset="0" stop-color="#ffffff"/><stop offset="1" stop-color="#a9a9a9"/></linearGradient></defs><rect x="5" y="4" width="12" height="11" rx="1.5" fill="url(#tg)"/><path d="M17 9.5l6-4v8z" fill="url(#tg)"/><rect x="6" y="2" width="5" height="2" fill="#ddd"/><circle cx="8" cy="7" r="1" fill="#555"/></svg>
<svg class="a" style="left:495px;top:250px;" width="28" height="24" viewBox="0 0 28 24"><defs><linearGradient id="tg" x1="0" y1="0" x2="0" y2="1"><stop offset="0" stop-color="#ffffff"/><stop offset="1" stop-color="#a9a9a9"/></linearGradient></defs><path d="M7 19L21 5" stroke="#ccc" stroke-width="1.1"/></svg>
<svg class="a" style="left:495px;top:281px;" width="28" height="24" viewBox="0 0 28 24"><defs><linearGradient id="tg" x1="0" y1="0" x2="0" y2="1"><stop offset="0" stop-color="#ffffff"/><stop offset="1" stop-color="#a9a9a9"/></linearGradient></defs><path d="M7 3h14v4h-4.5v12h-5V7H7z" fill="url(#tg)"/></svg>
<svg class="a" style="left:495px;top:310px;" width="28" height="24" viewBox="0 0 28 24"><defs><linearGradient id="tg" x1="0" y1="0" x2="0" y2="1"><stop offset="0" stop-color="#ffffff"/><stop offset="1" stop-color="#a9a9a9"/></linearGradient></defs><path d="M5 4L12 9L8 10L10 13L8 14L6 11L5 13Z" fill="#ddd"/><path d="M14 5l7 1 2 13H6l1-4" fill="none" stroke="#ccc" stroke-dasharray="2 2"/><rect x="20" y="4" width="3" height="3" fill="#ccc"/><rect x="21" y="17" width="3" height="3" fill="#ccc"/><rect x="5" y="17" width="3" height="3" fill="#ccc"/></svg>
<svg class="a" style="left:495px;top:342px;" width="28" height="24" viewBox="0 0 28 24"><defs><linearGradient id="tg" x1="0" y1="0" x2="0" y2="1"><stop offset="0" stop-color="#ffffff"/><stop offset="1" stop-color="#a9a9a9"/></linearGradient></defs><rect x="7" y="1" width="14" height="14" fill="url(#tg)"/></svg>
<svg class="a" style="left:495px;top:372px;" width="28" height="24" viewBox="0 0 28 24"><defs><linearGradient id="tg" x1="0" y1="0" x2="0" y2="1"><stop offset="0" stop-color="#ffffff"/><stop offset="1" stop-color="#a9a9a9"/></linearGradient></defs><circle cx="14" cy="8" r="8" fill="url(#tg)"/></svg>
<svg class="a" style="left:495px;top:401px;" width="28" height="24" viewBox="0 0 28 24"><defs><linearGradient id="tg" x1="0" y1="0" x2="0" y2="1"><stop offset="0" stop-color="#ffffff"/><stop offset="1" stop-color="#a9a9a9"/></linearGradient></defs><path d="M14 1L23 7.5L19.5 16H8.5L5 7.5Z" fill="url(#tg)"/></svg>
<svg class="a" style="left:495px;top:430px;" width="28" height="24" viewBox="0 0 28 24"><defs><linearGradient id="tg" x1="0" y1="0" x2="0" y2="1"><stop offset="0" stop-color="#ffffff"/><stop offset="1" stop-color="#a9a9a9"/></linearGradient></defs><path d="M14 0L16.5 6.5H23L18 10.5L20 17L14 13L8 17L10 10.5L5 6.5H11.5Z" fill="url(#tg)"/></svg>
<svg class="a" style="left:495px;top:460px;" width="28" height="24" viewBox="0 0 28 24"><defs><linearGradient id="tg" x1="0" y1="0" x2="0" y2="1"><stop offset="0" stop-color="#ffffff"/><stop offset="1" stop-color="#a9a9a9"/></linearGradient></defs><path d="M21.5 6A8 8 0 1 0 9 16" stroke="url(#tg)" stroke-width="4" fill="none"/></svg>
<svg class="a" style="left:495px;top:489px;" width="28" height="24" viewBox="0 0 28 24"><defs><linearGradient id="tg" x1="0" y1="0" x2="0" y2="1"><stop offset="0" stop-color="#ffffff"/><stop offset="1" stop-color="#a9a9a9"/></linearGradient></defs><path d="M14 0Q15 8 23 9Q15 10 14 18Q13 10 5 9Q13 8 14 0Z" fill="url(#tg)"/></svg>
<svg class="a" style="left:495px;top:520px;" width="28" height="24" viewBox="0 0 28 24"><defs><linearGradient id="tg" x1="0" y1="0" x2="0" y2="1"><stop offset="0" stop-color="#ffffff"/><stop offset="1" stop-color="#a9a9a9"/></linearGradient></defs><circle cx="14" cy="9" r="6" fill="none" stroke="url(#tg)" stroke-width="3.5"/><path d="M14 0v18M5 9h18M7.6 2.6l12.8 12.8M20.4 2.6L7.6 15.4" stroke="#ddd" stroke-width="3"/><circle cx="14" cy="9" r="2.5" fill="#464646"/></svg>
<svg class="a" style="left:495px;top:564px;" width="28" height="24" viewBox="0 0 28 24"><defs><linearGradient id="tg" x1="0" y1="0" x2="0" y2="1"><stop offset="0" stop-color="#ffffff"/><stop offset="1" stop-color="#a9a9a9"/></linearGradient></defs><path d="M9 1l5 5-5 5M15 1l5 5-5 5" stroke="#aaa" stroke-width="1.1" fill="none"/></svg>
<div class="a" style="left:530px;top:85px;width:1057px;height:1px;background:#c9b46c;"></div>
<div class="a" style="left:530px;top:86px;width:1057px;height:21px;background:#1e1e1e;"></div>
<div class="a" style="left:530px;top:86px;width:87px;height:21px;background:#464646;"></div>
<div class="a t" style="left:535px;top:89px;height:16px;line-height:16px;font-size:12px;color:#e6e6e6;">Composition 3</div>
<div class="a" style="left:530px;top:107px;width:1057px;height:451px;background:#000;"></div>
<div class="a" style="left:693px;top:127px;width:729px;height:410px;background:#00aeff;"></div>
<svg class="a" style="left:693px;top:127px;overflow:hidden;" width="729" height="410" viewBox="0 0 729 410"><circle cx="250" cy="294" r="39" fill="#8c52ff"/><circle cx="288" cy="275" r="30" fill="#4f9cff"/><circle cx="281" cy="274" r="29" fill="#ff4fbf"/><circle cx="337" cy="268" r="28" fill="#4f9cff"/><circle cx="328" cy="268" r="27" fill="#ff4f5e"/><circle cx="395" cy="268" r="27" fill="#ff7650"/><circle cx="449" cy="275" r="31" fill="#4f9cff"/><circle cx="457" cy="274" r="29" fill="#ff4f5e"/><circle cx="490" cy="291" r="38" fill="#ff4fbf"/><circle cx="477" cy="310" r="46" fill="#8c52ff"/><circle cx="272" cy="312" r="47" fill="#4f9cff"/><circle cx="282" cy="314" r="47" fill="#54ffb0"/><circle cx="468" cy="313" r="46" fill="#ff4fbf"/><circle cx="377" cy="323" r="51" fill="#ff4f5e"/></svg>
<div class="a t" style="left:868.0px;top:388px;height:16px;line-height:16px;font-size:16px;color:#fff;width:300px;text-align:center;-webkit-text-stroke:0.5px #fff;">1</div>
<div class="a t" style="left:938.0px;top:387px;height:16px;line-height:16px;font-size:15px;color:#fff;width:300px;text-align:center;-webkit-text-stroke:0.5px #fff;">6</div>
<div class="a t" style="left:824.0px;top:435px;height:16px;line-height:16px;font-size:27px;color:#fff;width:300px;text-align:center;-webkit-text-stroke:0.9px #fff;">4</div>
<div class="a t" style="left:919.0px;top:444px;height:16px;line-height:16px;font-size:30px;color:#fff;width:300px;text-align:center;-webkit-text-stroke:0.9px #fff;">8</div>
<div class="a t" style="left:1014.0px;top:433px;height:16px;line-height:16px;font-size:26px;color:#fff;width:300px;text-align:center;-webkit-text-stroke:0.9px #fff;letter-spacing:-1px;">12</div>
<div class="a" style="left:530px;top:107px;width:163px;height:451px;overflow:hidden;"><div class="a t" style="left:39px;top:352px;height:16px;line-height:16px;font-size:11.5px;color:#fff;"><span style="color:#f0f0f0">Hold S</span> <span style="color:#6d6d6d">Direct Layer Selection</span></div><div class="a t" style="left:39px;top:366px;height:16px;line-height:16px;font-size:11.5px;color:#fff;"><span style="color:#f0f0f0">Space</span> <span style="color:#6d6d6d">Play/ Stop</span></div><div class="a t" style="left:39px;top:380px;height:16px;line-height:16px;font-size:11.5px;color:#fff;"><span style="color:#f0f0f0">Space + click + drag</span> <span style="color:#6d6d6d">Pan</span></div><div class="a t" style="left:39px;top:394px;height:16px;line-height:16px;font-size:11.5px;color:#fff;"><span style="color:#f0f0f0">Alt + click + drag</span> <span style="color:#6d6d6d">Move Pivot Point</span></div><div class="a t" style="left:39px;top:408px;height:16px;line-height:16px;font-size:11.5px;color:#fff;"><span style="color:#f0f0f0">Shift</span> <span style="color:#6d6d6d">Enable Snapping</span></div></div>
<div class="a" style="left:693px;top:107px;width:120px;height:451px;overflow:hidden;"><div class="a t" style="left:-124px;top:352px;height:16px;line-height:16px;font-size:11.5px;color:#fff;"><span style="color:#f0f0f0">Hold S</span> <span style="color:#6a5fae">Direct Layer Selection</span></div><div class="a t" style="left:-124px;top:366px;height:16px;line-height:16px;font-size:11.5px;color:#fff;"><span style="color:#f0f0f0">Space</span> <span style="color:#6a5fae">Play/ Stop</span></div><div class="a t" style="left:-124px;top:380px;height:16px;line-height:16px;font-size:11.5px;color:#fff;"><span style="color:#f0f0f0">Space + click + drag</span> <span style="color:#6a5fae">Pan</span></div><div class="a t" style="left:-124px;top:394px;height:16px;line-height:16px;font-size:11.5px;color:#fff;"><span style="color:#f0f0f0">Alt + click + drag</span> <span style="color:#6a5fae">Move Pivot Point</span></div><div class="a t" style="left:-124px;top:408px;height:16px;line-height:16px;font-size:11.5px;color:#fff;"><span style="color:#f0f0f0">Shift</span> <span style="color:#6a5fae">Enable Snapping</span></div></div>
<div class="a t" style="left:908.0px;top:536px;height:16px;line-height:16px;font-size:12px;color:#f2f2f2;width:300px;text-align:center;">Viewport Quality: High</div>
<div class="a" style="left:530px;top:558px;width:1057px;height:22px;background:#464646;"></div>
<div class="a" style="left:535px;top:561px;width:77px;height:17px;background:#2a2a2a;border-radius:3px;"></div>
<div class="a t" style="left:539px;top:562px;height:16px;line-height:16px;font-size:12px;color:#e6e6e6;">38%</div>
<svg class="a" style="left:599px;top:566px;" width="11" height="6" viewBox="0 0 11 6"><path d="M1 1l4.5 4 4.5-4" stroke="#ccc" fill="none" stroke-width="1"/></svg>
<div class="a" style="left:866px;top:559px;width:100px;height:19px;background:#333;border-radius:3px;border:1px solid #262626;box-sizing:border-box;"></div>
<div class="a" style="left:886px;top:560px;width:1px;height:17px;background:#262626;"></div>
<div class="a" style="left:906px;top:560px;width:1px;height:17px;background:#262626;"></div>
<div class="a" style="left:926px;top:560px;width:1px;height:17px;background:#262626;"></div>
<div class="a" style="left:946px;top:560px;width:1px;height:17px;background:#262626;"></div>
<svg class="a" style="left:866px;top:559px;" width="100" height="19" viewBox="0 0 100 19"><rect x="4" y="5" width="2.2" height="9.8" fill="#d0d0d0"/><path d="M14.8 5L6.5 9.9L14.8 14.8Z" fill="#d0d0d0"/><path d="M32.5 5L24 9.9L32.5 14.8Z" fill="#d0d0d0"/><rect x="33.8" y="5" width="2.4" height="9.8" fill="#d0d0d0"/><path d="M44 4.5L54.4 9.9L44 15.3Z" fill="#d0d0d0"/><rect x="63.5" y="5" width="2.4" height="9.8" fill="#d0d0d0"/><path d="M67 5L75.5 9.9L67 14.8Z" fill="#d0d0d0"/><path d="M84 5L93.6 9.9L84 14.8Z" fill="#d0d0d0"/><rect x="94.2" y="5" width="2.4" height="9.8" fill="#d0d0d0"/></svg>
<div class="a" style="left:971px;top:559px;width:19px;height:19px;background:#333;border-radius:3px;border:1px solid #262626;box-sizing:border-box;"></div>
<svg class="a" style="left:971px;top:559px;" width="19" height="19" viewBox="0 0 19 19"><path d="M7 6.5H4.5v7.5h12V6.5h-1" stroke="#d0d0d0" stroke-width="1.4" fill="none"/><path d="M8 10V7.5h5" stroke="#d0d0d0" stroke-width="1.4" fill="none"/><path d="M12.5 4.5l3.5 3-3.5 3z" fill="#d0d0d0"/></svg>
<div class="a" style="left:1232px;top:559px;width:37px;height:19px;background:#333;border-radius:3px;border:1px solid #262626;box-sizing:border-box;"></div>
<svg class="a" style="left:1232px;top:559px;" width="37" height="19" viewBox="0 0 37 19"><path d="M3 9.5l4-4h10v8H7z" fill="#ccc"/><circle cx="8" cy="9.5" r="1.5" fill="#333"/><text x="26" y="14" font-size="12" fill="#c8c8c8" font-family="Liberation Sans">0</text></svg>
<div class="a" style="left:1272px;top:559px;width:31px;height:19px;background:#333;border-radius:3px;border:1px solid #262626;box-sizing:border-box;"></div>
<div class="a" style="left:1290px;top:560px;width:1px;height:17px;background:#262626;"></div>
<svg class="a" style="left:1272px;top:559px;" width="31" height="19" viewBox="0 0 31 19"><path d="M3 7h3l4-3v11l-4-3H3z" fill="#3ec56a"/><path d="M12 6c1.5 1 1.5 6 0 7M14 4c3 2 3 9 0 11" stroke="#3ec56a" stroke-width="1.2" fill="none"/><path d="M21.5 6.5v6l5-3z" fill="none" stroke="#999"/></svg>
<div class="a" style="left:1307px;top:559px;width:31px;height:19px;background:#333;border-radius:3px;border:1px solid #262626;box-sizing:border-box;"></div>
<div class="a" style="left:1325px;top:560px;width:1px;height:17px;background:#262626;"></div>
<svg class="a" style="left:1307px;top:559px;" width="31" height="19" viewBox="0 0 31 19"><path d="M5 11V8a5 5 0 0 1 10 0v3" stroke="#ccc" stroke-width="2.5" fill="none"/><path d="M22.5 6.5v6l5-3z" fill="none" stroke="#999"/></svg>
<div class="a" style="left:1342px;top:559px;width:31px;height:19px;background:#333;border-radius:3px;border:1px solid #262626;box-sizing:border-box;"></div>
<div class="a" style="left:1360px;top:560px;width:1px;height:17px;background:#262626;"></div>
<svg class="a" style="left:1342px;top:559px;" width="31" height="19" viewBox="0 0 31 19"><path d="M6 3v13M11 3v13M2 7h13M2 12h13" stroke="#ccc" stroke-width="1.2"/><path d="M22.5 6.5v6l5-3z" fill="none" stroke="#999"/></svg>
<div class="a" style="left:1377px;top:559px;width:19px;height:19px;background:#333;border-radius:3px;border:1px solid #262626;box-sizing:border-box;"></div>
<svg class="a" style="left:1377px;top:559px;" width="19" height="19" viewBox="0 0 19 19"><rect x="2" y="4" width="4" height="4" fill="#3ec56a"/><rect x="2" y="10" width="15" height="5" fill="#3ec56a"/><rect x="8" y="4" width="9" height="5" fill="none" stroke="#3ec56a" stroke-width="1.2"/></svg>
<div class="a" style="left:1400px;top:559px;width:19px;height:19px;background:#333;border-radius:3px;border:1px solid #262626;box-sizing:border-box;"></div>
<svg class="a" style="left:1400px;top:559px;" width="19" height="19" viewBox="0 0 19 19"><path d="M3 5l4 4.5-4 4.5M8 5l4 4.5-4 4.5M13 5l4 4.5-4 4.5" stroke="#ccc" stroke-width="1.8" fill="none"/></svg>
<div class="a" style="left:1423px;top:559px;width:31px;height:19px;background:#333;border-radius:3px;border:1px solid #262626;box-sizing:border-box;"></div>
<div class="a" style="left:1441px;top:560px;width:1px;height:17px;background:#262626;"></div>
<svg class="a" style="left:1423px;top:559px;" width="31" height="19" viewBox="0 0 31 19"><rect x="3" y="4" width="13" height="10" fill="none" stroke="#ccc" stroke-width="1.2"/><rect x="3" y="13" width="13" height="2" fill="#999"/><path d="M22.5 6.5v6l5-3z" fill="none" stroke="#999"/></svg>
<div class="a" style="left:1458px;top:559px;width:31px;height:19px;background:#333;border-radius:3px;border:1px solid #262626;box-sizing:border-box;"></div>
<div class="a" style="left:1476px;top:560px;width:1px;height:17px;background:#262626;"></div>
<svg class="a" style="left:1458px;top:559px;" width="31" height="19" viewBox="0 0 31 19"><rect x="3" y="3" width="8" height="6" fill="none" stroke="#bbb"/><path d="M5 11h8V5M7 13h8V7" stroke="#999" fill="none"/><path d="M22.5 6.5v6l5-3z" fill="none" stroke="#999"/></svg>
<div class="a" style="left:1493px;top:559px;width:31px;height:19px;background:#333;border-radius:3px;border:1px solid #262626;box-sizing:border-box;"></div>
<div class="a" style="left:1511px;top:560px;width:1px;height:17px;background:#262626;"></div>
<svg class="a" style="left:1493px;top:559px;" width="31" height="19" viewBox="0 0 31 19"><rect x="3" y="3" width="8" height="8" fill="#bbb"/><rect x="7" y="7" width="9" height="9" fill="#333" stroke="#ccc" stroke-width="1.2"/><path d="M22.5 6.5v6l5-3z" fill="none" stroke="#999"/></svg>
<div class="a" style="left:1528px;top:559px;width:31px;height:19px;background:#333;border-radius:3px;border:1px solid #262626;box-sizing:border-box;"></div>
<div class="a" style="left:1546px;top:560px;width:1px;height:17px;background:#262626;"></div>
<svg class="a" style="left:1528px;top:559px;" width="31" height="19" viewBox="0 0 31 19"><rect x="3" y="4" width="3" height="3" fill="#3ec56a"/><rect x="3" y="10" width="3" height="3" fill="#3ec56a"/><rect x="6" y="7" width="3" height="3" fill="#3ec56a"/><rect x="6" y="13" width="3" height="3" fill="#3ec56a"/><rect x="9" y="4" width="3" height="3" fill="#3ec56a"/><rect x="9" y="10" width="3" height="3" fill="#3ec56a"/><rect x="12" y="7" width="3" height="3" fill="#3ec56a"/><rect x="12" y="13" width="3" height="3" fill="#3ec56a"/><path d="M22.5 6.5v6l5-3z" fill="none" stroke="#999"/></svg>
<div class="a" style="left:1563px;top:559px;width:19px;height:19px;background:#333;border-radius:3px;border:1px solid #262626;box-sizing:border-box;"></div>
<svg class="a" style="left:1563px;top:559px;" width="19" height="19" viewBox="0 0 19 19"><circle cx="9.5" cy="9.5" r="4" fill="none" stroke="#ddd" stroke-width="2.5"/><path d="M9.5 2v15M2 9.5h15M4.2 4.2l10.6 10.6M14.8 4.2L4.2 14.8" stroke="#ddd" stroke-width="2"/><circle cx="9.5" cy="9.5" r="2" fill="#333"/></svg>
<div class="a" style="left:1587px;top:85px;width:6px;height:495px;background:#141414;"></div>
<div class="a" style="left:1914px;top:79px;width:6px;height:953px;background:#1c1c1c;"></div>
<div class="a" style="left:1593px;top:85px;width:321px;height:22px;background:#1c1c1c;"></div>
<div class="a" style="left:1593px;top:85px;width:40px;height:22px;background:#464646;border-radius:4px 4px 0 0;"></div>
<div class="a t" style="left:1598px;top:89px;height:16px;line-height:16px;font-size:12px;color:#e6e6e6;">Color</div>
<div class="a" style="left:1635px;top:85px;width:64px;height:22px;background:#262626;border-radius:4px 4px 0 0;"></div>
<div class="a t" style="left:1639px;top:89px;height:16px;line-height:16px;font-size:11.2px;color:#e6e6e6;">Add Layers</div>
<div class="a" style="left:1593px;top:107px;width:307px;height:378px;background:#464646;"></div>
<div class="a" style="left:1900px;top:107px;width:14px;height:378px;background:#2a2a2a;"></div>
<div class="a" style="left:1902px;top:153px;width:10px;height:302px;background:#4e4e4e;border-radius:5px;"></div>
<div class="a" style="left:1593px;top:107px;width:307px;height:200px;overflow:hidden;"><div class="a" style="left:53px;top:-47px;width:200px;height:200px;border-radius:50%;background:conic-gradient(from 90deg,#ff0000,#ff00ff,#0000ff,#00ffff,#00ff00,#ffff00,#ff0000);-webkit-mask:radial-gradient(circle,transparent 74.5px,#000 75.5px);mask:radial-gradient(circle,transparent 74.5px,#000 75.5px);"></div></div>
<div class="a" style="left:1593px;top:85px;width:40px;height:22px;background:#464646;border-radius:4px 4px 0 0;"></div>
<div class="a" style="left:1633px;top:85px;width:2px;height:22px;background:#1c1c1c;"></div>
<div class="a" style="left:1635px;top:85px;width:64px;height:22px;background:#262626;border-radius:4px 4px 0 0;"></div>
<div class="a t" style="left:1598px;top:89px;height:16px;line-height:16px;font-size:12px;color:#e6e6e6;">Color</div>
<div class="a t" style="left:1639px;top:89px;height:16px;line-height:16px;font-size:11.2px;color:#e6e6e6;">Add Layers</div>
<div class="a" style="left:1699px;top:85px;width:201px;height:22px;background:#1c1c1c;"></div>
<div class="a" style="left:1702px;top:116px;width:90px;height:90px;background:linear-gradient(to right,#000,rgba(0,0,0,0)),linear-gradient(to bottom,#fff,#ff00a0);"></div>
<svg class="a" style="left:1785px;top:171px;" width="13" height="13" viewBox="0 0 13 13"><circle cx="6.5" cy="6.5" r="5.5" fill="none" stroke="#eee" stroke-width="1"/></svg>
<svg class="a" style="left:1807px;top:208px;" width="13" height="13" viewBox="0 0 13 13"><circle cx="6.5" cy="6.5" r="5.5" fill="none" stroke="#eee" stroke-width="1"/></svg>
<div class="a" style="left:1600px;top:273px;width:22px;height:22px;background:#fd4fbf;border-radius:3px;"></div>
<div class="a t" style="left:1625px;top:277px;height:16px;line-height:16px;font-size:12px;color:#ececec;">Hot Pink</div>
<div class="a" style="left:1870px;top:273px;width:22px;height:22px;background:#2c2c2c;border-radius:3px;border:1px solid #222;box-sizing:border-box;"></div>
<svg class="a" style="left:1871px;top:274px;" width="20" height="20" viewBox="0 0 20 20"><path d="M5 15l7-7M9 7l4 4" stroke="#ccc" stroke-width="1.5"/><path d="M12 6l2-2 2 2-2 2z" fill="#ccc"/></svg>
<div class="a" style="left:1600px;top:300px;width:50px;height:18px;background:#3c3c3c;border-radius:3px;border:1px solid #555;box-sizing:border-box;"></div>
<div class="a t" style="left:1603px;top:302px;height:16px;line-height:16px;font-size:12px;color:#e6e6e6;">Hex</div>
<svg class="a" style="left:1638px;top:306px;" width="10" height="6" viewBox="0 0 10 6"><path d="M1 1l4 4 4-4" stroke="#ccc" fill="none" stroke-width="1"/></svg>
<div class="a" style="left:1653px;top:298px;width:239px;height:21px;background:#2a2a2a;border-radius:2px;"></div>
<div class="a t" style="left:1658px;top:302px;height:16px;line-height:16px;font-size:11px;color:#555;">#</div>
<div class="a t" style="left:1670px;top:302px;height:16px;line-height:16px;font-size:12px;color:#e6e6e6;">fd4fbf</div>
<div class="a" style="left:1600px;top:330px;width:238px;height:4px;background:#e6e6e6;border-radius:2px;"></div>
<svg class="a" style="left:1827px;top:326px;" width="12" height="12" viewBox="0 0 12 12"><circle cx="6" cy="6" r="5" fill="#6fc4a4"/><circle cx="6" cy="6" r="2" fill="#5aa88a"/></svg>
<div class="a" style="left:1850px;top:324px;width:42px;height:17px;background:#2a2a2a;border-radius:2px;"></div>
<div class="a t" style="left:1853px;top:326px;height:16px;line-height:16px;font-size:12px;color:#555;">A</div>
<div class="a t" style="left:1865px;top:326px;height:16px;line-height:16px;font-size:12px;color:#e6e6e6;">255</div>
<div class="a" style="left:1597px;top:346px;width:300px;height:22px;background:#262626;border-radius:4px 4px 0 0;"></div>
<div class="a" style="left:1599px;top:348px;width:147px;height:20px;background:#464646;border-radius:4px 4px 0 0;"></div>
<div class="a t" style="left:1523.0px;top:350px;height:16px;line-height:16px;font-size:12px;color:#ececec;width:300px;text-align:center;">Swatches</div>
<div class="a t" style="left:1670.0px;top:350px;height:16px;line-height:16px;font-size:12px;color:#c8c8c8;width:300px;text-align:center;">Generator</div>
<div class="a" style="left:1598px;top:370px;width:256px;height:20px;background:#555;border-radius:3px;"></div>
<div class="a" style="left:1600px;top:372px;width:61px;height:17px;background:#2a2a2a;border-radius:3px;"></div>
<svg class="a" style="left:1604px;top:374px;" width="14" height="13" viewBox="0 0 14 13"><path d="M2 1v11M5 1v11M8 1l4 11" stroke="#3ec56a" stroke-width="1.6"/></svg>
<div class="a t" style="left:1620px;top:374px;height:16px;line-height:16px;font-size:12px;color:#ececec;">Library</div>
<svg class="a" style="left:1670px;top:374px;" width="12" height="12" viewBox="0 0 12 12"><path d="M1 2h4l1 1h5v8H1z" fill="#bbb"/><path d="M3 6h6M3 8h6" stroke="#555"/></svg>
<div class="a t" style="left:1686px;top:374px;height:16px;line-height:16px;font-size:12px;color:#d8d8d8;">Project</div>
<svg class="a" style="left:1737px;top:374px;" width="10" height="12" viewBox="0 0 10 12"><path d="M1 1h5l3 3v7H1z" fill="none" stroke="#ccc"/></svg>
<div class="a t" style="left:1751px;top:374px;height:16px;line-height:16px;font-size:12px;color:#d8d8d8;">Scene</div>
<svg class="a" style="left:1800px;top:374px;" width="12" height="12" viewBox="0 0 12 12"><path d="M2 1h8v6l-4 4H2z" fill="none" stroke="#ccc" stroke-width="1.2"/></svg>
<div class="a t" style="left:1815px;top:374px;height:16px;line-height:16px;font-size:12px;color:#d8d8d8;">Labels</div>
<div class="a" style="left:1857px;top:370px;width:39px;height:20px;background:#555;border-radius:3px;"></div>
<div class="a" style="left:1858px;top:372px;width:17px;height:17px;background:#222;border-radius:3px;"></div>
<svg class="a" style="left:1859px;top:373px;" width="15" height="15" viewBox="0 0 15 15"><rect x="3" y="3" width="4" height="4" fill="#3ec56a"/><rect x="9" y="3" width="4" height="4" fill="#3ec56a"/><rect x="3" y="9" width="4" height="4" fill="#3ec56a"/><rect x="9" y="9" width="4" height="4" fill="#3ec56a"/></svg>
<svg class="a" style="left:1879px;top:373px;" width="15" height="15" viewBox="0 0 15 15"><path d="M2 4h11M2 7.5h11M2 11h11" stroke="#ccc" stroke-width="1.2"/></svg>
<div class="a" style="left:1598px;top:393px;width:275px;height:16px;background:#555;border-radius:3px;"></div>
<div class="a t" style="left:1601px;top:394px;height:16px;line-height:16px;font-size:12px;color:#ececec;">new</div>
<svg class="a" style="left:1860px;top:398px;" width="10" height="6" viewBox="0 0 10 6"><path d="M1 1l4 4 4-4" stroke="#ccc" fill="none" stroke-width="1"/></svg>
<div class="a" style="left:1880px;top:400px;width:2px;height:2px;background:#ccc;"></div>
<div class="a" style="left:1885px;top:400px;width:2px;height:2px;background:#ccc;"></div>
<div class="a" style="left:1890px;top:400px;width:2px;height:2px;background:#ccc;"></div>
<div class="a" style="left:1598px;top:409px;width:299px;height:76px;background:#262626;"></div>
<div class="a" style="left:1600px;top:412px;width:18px;height:18px;background:#8c52ff;border-radius:3px;"></div>
<div class="a" style="left:1622px;top:412px;width:18px;height:18px;background:#4f9cff;border-radius:3px;"></div>
<div class="a" style="left:1644px;top:412px;width:18px;height:18px;background:#ff7650;border-radius:3px;"></div>
<div class="a" style="left:1666px;top:412px;width:18px;height:18px;background:#54f0ac;border-radius:3px;"></div>
<div class="a" style="left:1688px;top:412px;width:18px;height:18px;background:#ff4f5e;border-radius:3px;"></div>
<div class="a" style="left:1710px;top:412px;width:18px;height:18px;background:#ff4fbf;border-radius:3px;"></div>
<div class="a" style="left:1593px;top:485px;width:321px;height:6px;background:#141414;"></div>
<div class="a" style="left:1593px;top:491px;width:321px;height:20px;background:#1c1c1c;"></div>
<div class="a" style="left:1593px;top:490px;width:38px;height:21px;background:#464646;border-radius:4px 4px 0 0;"></div>
<div class="a t" style="left:1598px;top:494px;height:16px;line-height:16px;font-size:12px;color:#e6e6e6;">Align</div>
<div class="a" style="left:1593px;top:511px;width:321px;height:69px;background:#464646;"></div>
<div class="a t" style="left:1601px;top:525px;height:16px;line-height:16px;font-size:12px;color:#e6e6e6;">Alignment</div>
<div class="a t" style="left:1601px;top:553px;height:16px;line-height:16px;font-size:12px;color:#e6e6e6;">Distribution</div>
<div class="a" style="left:1790px;top:523px;width:55px;height:18px;background:#2c2c2c;border-radius:4px;border:1px solid #222;box-sizing:border-box;"></div>
<div class="a" style="left:1808px;top:524px;width:1px;height:16px;background:#222;"></div>
<div class="a" style="left:1826px;top:524px;width:1px;height:16px;background:#222;"></div>
<svg class="a" style="left:1790px;top:523px;" width="18" height="18" viewBox="0 0 18 18"><path d="M2 3v12" stroke="#e0e0e0"/><path d="M4 6h6M4 10h11" stroke="#e0e0e0" stroke-width="2"/></svg>
<svg class="a" style="left:1808px;top:523px;" width="18" height="18" viewBox="0 0 18 18"><path d="M9 2v14" stroke="#e0e0e0"/><path d="M5 6h8M3 10h12" stroke="#e0e0e0" stroke-width="2"/></svg>
<svg class="a" style="left:1826px;top:523px;" width="18" height="18" viewBox="0 0 18 18"><path d="M16 3v12" stroke="#e0e0e0"/><path d="M8 6h6M3 10h11" stroke="#e0e0e0" stroke-width="2"/></svg>
<div class="a" style="left:1853px;top:523px;width:55px;height:18px;background:#2c2c2c;border-radius:4px;border:1px solid #222;box-sizing:border-box;"></div>
<div class="a" style="left:1871px;top:524px;width:1px;height:16px;background:#222;"></div>
<div class="a" style="left:1889px;top:524px;width:1px;height:16px;background:#222;"></div>
<svg class="a" style="left:1853px;top:523px;" width="18" height="18" viewBox="0 0 18 18"><path d="M2 2h14" stroke="#e0e0e0"/><path d="M6 4v12M11 4v6" stroke="#e0e0e0" stroke-width="2"/></svg>
<svg class="a" style="left:1871px;top:523px;" width="18" height="18" viewBox="0 0 18 18"><path d="M2 9h14" stroke="#e0e0e0"/><path d="M6 3v12M11 5v8" stroke="#e0e0e0" stroke-width="2"/></svg>
<svg class="a" style="left:1889px;top:523px;" width="18" height="18" viewBox="0 0 18 18"><path d="M2 16h14" stroke="#e0e0e0"/><path d="M6 4v10M11 9v5" stroke="#e0e0e0" stroke-width="2"/></svg>
<div class="a" style="left:1790px;top:551px;width:55px;height:18px;background:#2c2c2c;border-radius:4px;border:1px solid #222;box-sizing:border-box;"></div>
<div class="a" style="left:1808px;top:552px;width:1px;height:16px;background:#222;"></div>
<div class="a" style="left:1826px;top:552px;width:1px;height:16px;background:#222;"></div>
<svg class="a" style="left:1790px;top:551px;" width="18" height="18" viewBox="0 0 18 18"><path d="M2 3v12M16 3v12" stroke="#e0e0e0"/><path d="M9 5v8" stroke="#e0e0e0" stroke-width="2"/></svg>
<svg class="a" style="left:1808px;top:551px;" width="18" height="18" viewBox="0 0 18 18"><path d="M2 3h14M2 15h14" stroke="#e0e0e0"/><path d="M5 9h8" stroke="#e0e0e0" stroke-width="2"/></svg>
<svg class="a" style="left:1826px;top:551px;" width="18" height="18" viewBox="0 0 18 18"><path d="M2 5V2h3M13 2h3v3M2 13v3h3M16 13v3h-3" stroke="#e0e0e0"/><path d="M6 11v2M9 8v3M12 6v3" stroke="#e0e0e0" stroke-width="2"/></svg>
<div class="a" style="left:494px;top:580px;width:1420px;height:6px;background:#141414;"></div>
<div class="a" style="left:494px;top:586px;width:1420px;height:22px;background:#1c1c1c;"></div>
<div class="a" style="left:494px;top:586px;width:89px;height:22px;background:#484848;border-radius:4px 4px 0 0;"></div>
<div class="a t" style="left:499px;top:590px;height:16px;line-height:16px;font-size:12px;color:#e6e6e6;">Scene Window</div>
<div class="a" style="left:585px;top:586px;width:99px;height:22px;background:#262626;border-radius:4px 4px 0 0;"></div>
<div class="a t" style="left:589px;top:590px;height:16px;line-height:16px;font-size:12px;color:#e6e6e6;">JavaScript Editor</div>
<div class="a" style="left:686px;top:586px;width:115px;height:22px;background:#262626;border-radius:4px 4px 0 0;"></div>
<div class="a t" style="left:690px;top:590px;height:16px;line-height:16px;font-size:12px;color:#e6e6e6;">Dependency Graph</div>
<div class="a" style="left:494px;top:608px;width:1420px;height:22px;background:#262626;"></div>
<div class="a t" style="left:573.0px;top:612px;height:16px;line-height:16px;font-size:12px;color:#b4b4b4;width:300px;text-align:center;">Composition 1</div>
<svg class="a" style="left:951px;top:614px;" width="10" height="10" viewBox="0 0 10 10"><path d="M1 1l8 8M9 1L1 9" stroke="#aaa" stroke-width="1"/></svg>
<div class="a" style="left:969px;top:614px;width:1px;height:12px;background:#888;"></div>
<div class="a t" style="left:1043.0px;top:612px;height:16px;line-height:16px;font-size:12px;color:#b4b4b4;width:300px;text-align:center;">Composition 2</div>
<svg class="a" style="left:1421px;top:614px;" width="10" height="10" viewBox="0 0 10 10"><path d="M1 1l8 8M9 1L1 9" stroke="#aaa" stroke-width="1"/></svg>
<div class="a" style="left:1439px;top:610px;width:470px;height:20px;background:#464646;border-radius:4px 4px 0 0;"></div>
<div class="a t" style="left:1513.0px;top:612px;height:16px;line-height:16px;font-size:12px;color:#e8e8e8;width:300px;text-align:center;">Composition 3</div>
<svg class="a" style="left:1891px;top:614px;" width="10" height="10" viewBox="0 0 10 10"><path d="M1 1l8 8M9 1L1 9" stroke="#bbb" stroke-width="1"/></svg>
<div class="a" style="left:494px;top:630px;width:490px;height:346px;background:#3a3a3a;"></div>
<div class="a" style="left:497px;top:632px;width:279px;height:20px;background:#262626;border-radius:10px;"></div>
<svg class="a" style="left:499px;top:635px;" width="14" height="14" viewBox="0 0 14 14"><circle cx="5.5" cy="5.5" r="4.5" fill="none" stroke="#e8e8e8" stroke-width="1.1"/><path d="M8.8 8.8l3.5 3.5" stroke="#e8e8e8" stroke-width="1.7"/></svg>
<div class="a t" style="left:520px;top:635px;height:16px;line-height:16px;font-size:11.6px;color:#8a8a8a;">Enter a layer name</div>
<div class="a" style="left:778px;top:632px;width:20px;height:20px;background:#333;border-radius:3px;border:1px solid #262626;box-sizing:border-box;"></div>
<svg class="a" style="left:778px;top:632px;" width="20" height="20" viewBox="0 0 20 20"><path d="M10 4v12M4 10h12" stroke="#eee" stroke-width="2.2"/><path d="M16 18l3-3v3z" fill="#5c9"/></svg>
<div class="a" style="left:822px;top:632px;width:19px;height:20px;background:#333;border-radius:3px;border:1px solid #262626;box-sizing:border-box;"></div>
<svg class="a" style="left:822px;top:632px;" width="19" height="20" viewBox="0 0 19 20"><path d="M4 15a6 6 0 0 1 6-8" stroke="#555" stroke-width="2.2" fill="none"/><path d="M6 13a5.5 5.5 0 0 1 6-6" stroke="#888" stroke-width="2.2" fill="none"/><circle cx="12.5" cy="7.5" r="4.2" fill="#dcdcdc"/></svg>
<div class="a" style="left:844px;top:632px;width:19px;height:20px;background:#333;border-radius:3px;border:1px solid #262626;box-sizing:border-box;"></div>
<svg class="a" style="left:844px;top:632px;" width="19" height="20" viewBox="0 0 19 20"><circle cx="5" cy="5" r="1.2" fill="#ccc"/><circle cx="12" cy="5" r="1.2" fill="#ccc"/><circle cx="5" cy="11" r="1.2" fill="#ccc"/><path d="M12 9v8M8 13h8" stroke="#eee" stroke-width="1.8"/><path d="M15 18l3-3v3z" fill="#5c9"/></svg>
<div class="a" style="left:866px;top:632px;width:19px;height:20px;background:#333;border-radius:3px;border:1px solid #262626;box-sizing:border-box;"></div>
<svg class="a" style="left:866px;top:632px;" width="19" height="20" viewBox="0 0 19 20"><path d="M3 5h13M3 10h13M3 15h13" stroke="#ddd" stroke-width="1.2"/><circle cx="8" cy="5" r="2" fill="#333" stroke="#ddd"/><circle cx="12" cy="10" r="2" fill="#333" stroke="#ddd"/><circle cx="8" cy="15" r="2" fill="#333" stroke="#ddd"/><path d="M15 18l3-3v3z" fill="#5c9"/></svg>
<div class="a" style="left:888px;top:632px;width:94px;height:20px;background:#262626;border-radius:3px;"></div>
<div class="a t" style="left:893px;top:635px;height:16px;line-height:16px;font-size:12px;color:#555;">F</div>
<div class="a t" style="left:905px;top:635px;height:16px;line-height:16px;font-size:12px;color:#e6e6e6;">153</div>
<div class="a" style="left:494px;top:654px;width:490px;height:18px;background:#464646;"></div>
<svg class="a" style="left:498px;top:655px;" width="112" height="16" viewBox="0 0 112 16"><rect x="2.5" y="7" width="9" height="7" fill="#bbb"/><path d="M4.5 7V5a2.5 2.5 0 0 1 5 0v2" stroke="#bbb" stroke-width="1.3" fill="none"/><rect x="6" y="9.5" width="2" height="2" fill="#464646"/><ellipse cx="25.5" cy="8.5" rx="6.5" ry="3.5" fill="none" stroke="#bbb" stroke-width="1.1"/><circle cx="25.5" cy="8.5" r="2" fill="#bbb"/><path d="M43 3l6 3v7l-6 3-6-3V6z M37 6l6 3 6-3M43 9v7" stroke="#bbb" stroke-width="1.1" fill="none"/><path d="M57 6h3l4-3v11l-4-3h-3z" fill="#bbb"/><path d="M66 5c1.5 1.5 1.5 5.5 0 7M68 3c3 3 3 9 0 12" stroke="#bbb" stroke-width="1.1" fill="none"/><path d="M77 14l6-6M81 6l3 3" stroke="#999" stroke-width="1.4"/><path d="M84 5l2-2 2 2-2 2z" fill="#999"/><path d="M95 8.5l4-4h10v8H99z" fill="#ccc"/><circle cx="100" cy="8.5" r="1.5" fill="#464646"/></svg>
<div class="a t" style="left:649px;top:656px;height:16px;line-height:16px;font-size:12px;color:#e8e8e8;">Name</div>
<div class="a" style="left:496px;top:674px;width:18px;height:18px;background:#2a2a2a;border-radius:2px;"></div>
<div class="a" style="left:515px;top:674px;width:18px;height:18px;background:#2a2a2a;border-radius:2px;"></div>
<svg class="a" style="left:515px;top:674px;" width="18" height="18" viewBox="0 0 18 18"><path d="M13.2 7.2A5 5 0 1 1 10.5 4.7" stroke="#d8d8d8" stroke-width="1.1" fill="none"/><path d="M6 9l2.5 2.5L14.5 5" stroke="#e0e0e0" stroke-width="1.5" fill="none"/></svg>
<div class="a" style="left:573px;top:675px;width:16px;height:16px;background:#6ddc9a;border-radius:2px;"></div>
<svg class="a" style="left:593px;top:677px;" width="15" height="12" viewBox="0 0 15 12"><path d="M1 6l4-4h9v8H5z" fill="#ccc"/><circle cx="6" cy="6" r="1.5" fill="#3a3a3a"/></svg>
<div class="a" style="left:610px;top:674px;width:15px;height:18px;background:#333;border-radius:2px;"></div>
<div class="a" style="left:626px;top:674px;width:15px;height:18px;background:#303030;border-radius:2px;"></div>
<svg class="a" style="left:613px;top:680px;" width="10" height="6" viewBox="0 0 10 6"><path d="M1 1l4 4 4-4" stroke="#888" fill="none" stroke-width="1"/></svg>
<svg class="a" style="left:649px;top:675px;" width="16" height="16" viewBox="0 0 16 16"><rect x="1" y="7" width="7" height="7" fill="#9cc8f5"/><path d="M5 3h10M8 5.5h7M8 8h7" stroke="#ddd" stroke-width="1.2"/><path d="M5 3v4" stroke="#ddd"/></svg>
<div class="a t" style="left:667px;top:676px;height:16px;line-height:16px;font-size:12px;color:#ececec;">Color Array</div>
<div class="a" style="left:930px;top:675px;width:21px;height:16px;background:#2e2e2e;border-radius:3px;"></div>
<div class="a" style="left:940px;top:675px;width:1px;height:16px;background:#262626;"></div>
<svg class="a" style="left:930px;top:675px;" width="21" height="16" viewBox="0 0 21 16"><path d="M2 8L5 4.8H8.2V11.2H5Z" fill="#d9c070"/><path d="M12.8 4.8H16L19.2 8L16 11.2H12.8Z" fill="#c050f0"/></svg>
<svg class="a" style="left:955px;top:677px;" width="12" height="12" viewBox="0 0 12 12"><circle cx="6" cy="6" r="4.5" fill="none" stroke="#777" stroke-width="1.2"/></svg>
<div class="a" style="left:496px;top:696px;width:18px;height:18px;background:#2a2a2a;border-radius:2px;"></div>
<div class="a" style="left:515px;top:696px;width:18px;height:18px;background:#2a2a2a;border-radius:2px;"></div>
<svg class="a" style="left:515px;top:696px;" width="18" height="18" viewBox="0 0 18 18"><path d="M13.2 7.2A5 5 0 1 1 10.5 4.7" stroke="#d8d8d8" stroke-width="1.1" fill="none"/><path d="M6 9l2.5 2.5L14.5 5" stroke="#e0e0e0" stroke-width="1.5" fill="none"/></svg>
<div class="a" style="left:573px;top:697px;width:16px;height:16px;background:#c9ea74;border-radius:2px;"></div>
<svg class="a" style="left:593px;top:699px;" width="15" height="12" viewBox="0 0 15 12"><path d="M1 6l4-4h9v8H5z" fill="#ccc"/><circle cx="6" cy="6" r="1.5" fill="#3a3a3a"/></svg>
<svg class="a" style="left:668px;top:697px;" width="16" height="16" viewBox="0 0 16 16"><path d="M1 2l2.5 2.5M3.5 2L1 4.5M11 2l2 2M13 2l-2 2M1 11l3 3M4 11l-3 3M9 11l3 3M12 11l-3 3" stroke="#7fd28a" stroke-width="1.1"/><circle cx="7" cy="7" r="1" fill="#7fd28a"/></svg>
<div class="a t" style="left:686px;top:698px;height:16px;line-height:16px;font-size:12px;color:#ececec;">Random [Index]</div>
<div class="a" style="left:930px;top:697px;width:21px;height:16px;background:#2e2e2e;border-radius:3px;"></div>
<div class="a" style="left:940px;top:697px;width:1px;height:16px;background:#262626;"></div>
<svg class="a" style="left:930px;top:697px;" width="21" height="16" viewBox="0 0 21 16"><path d="M2 8L5 4.8H8.2V11.2H5Z" fill="#777"/><path d="M12.8 4.8H16L19.2 8L16 11.2H12.8Z" fill="#c050f0"/></svg>
<svg class="a" style="left:955px;top:699px;" width="12" height="12" viewBox="0 0 12 12"><circle cx="6" cy="6" r="4.5" fill="none" stroke="#777" stroke-width="1.2"/></svg>
<div class="a" style="left:496px;top:718px;width:18px;height:18px;background:#2a2a2a;border-radius:2px;"></div>
<div class="a" style="left:515px;top:718px;width:18px;height:18px;background:#2a2a2a;border-radius:2px;"></div>
<svg class="a" style="left:515px;top:718px;" width="18" height="18" viewBox="0 0 18 18"><path d="M13.2 7.2A5 5 0 1 1 10.5 4.7" stroke="#d8d8d8" stroke-width="1.1" fill="none"/><path d="M6 9l2.5 2.5L14.5 5" stroke="#e0e0e0" stroke-width="1.5" fill="none"/></svg>
<div class="a" style="left:573px;top:719px;width:16px;height:16px;background:#c9ea74;border-radius:2px;"></div>
<svg class="a" style="left:593px;top:721px;" width="15" height="12" viewBox="0 0 15 12"><path d="M1 6l4-4h9v8H5z" fill="#ccc"/><circle cx="6" cy="6" r="1.5" fill="#3a3a3a"/></svg>
<svg class="a" style="left:649px;top:719px;" width="16" height="16" viewBox="0 0 16 16"><path d="M0 10C1.3 10 1.7 4.5 3 4.5S4.7 12 6 12 7.7 4.5 9 4.5 10.7 12 12 12 13.5 8 14.5 7" stroke="#6ac86c" stroke-width="1.2" fill="none"/></svg>
<div class="a t" style="left:667px;top:720px;height:16px;line-height:16px;font-size:12px;color:#ececec;">Oscillator [Position.Z] Cosine</div>
<div class="a" style="left:930px;top:719px;width:21px;height:16px;background:#2e2e2e;border-radius:3px;"></div>
<div class="a" style="left:940px;top:719px;width:1px;height:16px;background:#262626;"></div>
<svg class="a" style="left:930px;top:719px;" width="21" height="16" viewBox="0 0 21 16"><path d="M2 8L5 4.8H8.2V11.2H5Z" fill="#d9c070"/><path d="M12.8 4.8H16L19.2 8L16 11.2H12.8Z" fill="#c050f0"/></svg>
<div class="a" style="left:941px;top:719px;width:10px;height:16px;border:1px solid #9a58b8;box-sizing:border-box;border-radius:1px;"></div>
<svg class="a" style="left:955px;top:721px;" width="12" height="12" viewBox="0 0 12 12"><circle cx="6" cy="6" r="4.5" fill="none" stroke="#777" stroke-width="1.2"/></svg>
<div class="a" style="left:496px;top:740px;width:18px;height:18px;background:#2a2a2a;border-radius:2px;"></div>
<div class="a" style="left:515px;top:740px;width:18px;height:18px;background:#2a2a2a;border-radius:2px;"></div>
<svg class="a" style="left:515px;top:740px;" width="18" height="18" viewBox="0 0 18 18"><path d="M13.2 7.2A5 5 0 1 1 10.5 4.7" stroke="#d8d8d8" stroke-width="1.1" fill="none"/><path d="M6 9l2.5 2.5L14.5 5" stroke="#e0e0e0" stroke-width="1.5" fill="none"/></svg>
<div class="a" style="left:573px;top:741px;width:16px;height:16px;background:#c9ea74;border-radius:2px;"></div>
<svg class="a" style="left:593px;top:743px;" width="15" height="12" viewBox="0 0 15 12"><path d="M1 6l4-4h9v8H5z" fill="#ccc"/><circle cx="6" cy="6" r="1.5" fill="#3a3a3a"/></svg>
<svg class="a" style="left:649px;top:741px;" width="16" height="16" viewBox="0 0 16 16"><path d="M0 10C1.3 10 1.7 4.5 3 4.5S4.7 12 6 12 7.7 4.5 9 4.5 10.7 12 12 12 13.5 8 14.5 7" stroke="#6ac86c" stroke-width="1.2" fill="none"/></svg>
<div class="a t" style="left:667px;top:742px;height:16px;line-height:16px;font-size:12px;color:#ececec;">Oscillator [Position.X] Sine Driver</div>
<div class="a" style="left:930px;top:741px;width:21px;height:16px;background:#2e2e2e;border-radius:3px;"></div>
<div class="a" style="left:940px;top:741px;width:1px;height:16px;background:#262626;"></div>
<svg class="a" style="left:930px;top:741px;" width="21" height="16" viewBox="0 0 21 16"><path d="M2 8L5 4.8H8.2V11.2H5Z" fill="#d9c070"/><path d="M12.8 4.8H16L19.2 8L16 11.2H12.8Z" fill="#c050f0"/></svg>
<div class="a" style="left:941px;top:741px;width:10px;height:16px;border:1px solid #9a58b8;box-sizing:border-box;border-radius:1px;"></div>
<svg class="a" style="left:955px;top:743px;" width="12" height="12" viewBox="0 0 12 12"><circle cx="6" cy="6" r="4.5" fill="none" stroke="#777" stroke-width="1.2"/></svg>
<div class="a" style="left:496px;top:762px;width:18px;height:18px;background:#2a2a2a;border-radius:2px;"></div>
<div class="a" style="left:515px;top:762px;width:18px;height:18px;background:#2a2a2a;border-radius:2px;"></div>
<svg class="a" style="left:515px;top:762px;" width="18" height="18" viewBox="0 0 18 18"><path d="M13.2 7.2A5 5 0 1 1 10.5 4.7" stroke="#d8d8d8" stroke-width="1.1" fill="none"/><path d="M6 9l2.5 2.5L14.5 5" stroke="#e0e0e0" stroke-width="1.5" fill="none"/></svg>
<div class="a" style="left:573px;top:763px;width:16px;height:16px;background:#5b8de6;border-radius:2px;"></div>
<svg class="a" style="left:593px;top:765px;" width="15" height="12" viewBox="0 0 15 12"><path d="M1 6l4-4h9v8H5z" fill="#ccc"/><circle cx="6" cy="6" r="1.5" fill="#3a3a3a"/></svg>
<svg class="a" style="left:649px;top:763px;" width="16" height="16" viewBox="0 0 16 16"><rect x="1" y="5" width="10" height="10" fill="#9cc8f5"/><path d="M6 8v5" stroke="#333" stroke-width="2"/><path d="M12 1v5M9.5 3.5h5" stroke="#ddd" stroke-width="1"/></svg>
<div class="a t" style="left:667px;top:764px;height:16px;line-height:16px;font-size:12px;color:#ececec;">Index Context [Number]</div>
<div class="a" style="left:930px;top:763px;width:21px;height:16px;background:#2e2e2e;border-radius:3px;"></div>
<div class="a" style="left:940px;top:763px;width:1px;height:16px;background:#262626;"></div>
<svg class="a" style="left:930px;top:763px;" width="21" height="16" viewBox="0 0 21 16"><path d="M2 8L5 4.8H8.2V11.2H5Z" fill="#777"/><path d="M12.8 4.8H16L19.2 8L16 11.2H12.8Z" fill="#c050f0"/></svg>
<svg class="a" style="left:955px;top:765px;" width="12" height="12" viewBox="0 0 12 12"><circle cx="6" cy="6" r="4.5" fill="none" stroke="#777" stroke-width="1.2"/></svg>
<div class="a" style="left:496px;top:784px;width:18px;height:18px;background:#2a2a2a;border-radius:2px;"></div>
<div class="a" style="left:515px;top:784px;width:18px;height:18px;background:#2a2a2a;border-radius:2px;"></div>
<svg class="a" style="left:515px;top:784px;" width="18" height="18" viewBox="0 0 18 18"><path d="M13.2 7.2A5 5 0 1 1 10.5 4.7" stroke="#d8d8d8" stroke-width="1.1" fill="none"/><path d="M6 9l2.5 2.5L14.5 5" stroke="#e0e0e0" stroke-width="1.5" fill="none"/></svg>
<div class="a" style="left:573px;top:785px;width:16px;height:16px;background:#5b8de6;border-radius:2px;"></div>
<svg class="a" style="left:593px;top:787px;" width="15" height="12" viewBox="0 0 15 12"><path d="M1 6l4-4h9v8H5z" fill="#ccc"/><circle cx="6" cy="6" r="1.5" fill="#3a3a3a"/></svg>
<svg class="a" style="left:649px;top:785px;" width="16" height="16" viewBox="0 0 16 16"><text x="0" y="10" font-size="8.5" fill="#9cc8f5" font-family="Liberation Sans">abc</text><path d="M0 12h15M0 14.5h15" stroke="#9cc8f5" stroke-width="1" stroke-dasharray="3 1"/></svg>
<div class="a t" style="left:667px;top:786px;height:16px;line-height:16px;font-size:12px;color:#ececec;">String Generator [String]</div>
<div class="a" style="left:930px;top:785px;width:21px;height:16px;background:#2e2e2e;border-radius:3px;"></div>
<div class="a" style="left:940px;top:785px;width:1px;height:16px;background:#262626;"></div>
<svg class="a" style="left:930px;top:785px;" width="21" height="16" viewBox="0 0 21 16"><path d="M2 8L5 4.8H8.2V11.2H5Z" fill="#d9c070"/><path d="M12.8 4.8H16L19.2 8L16 11.2H12.8Z" fill="#c050f0"/></svg>
<svg class="a" style="left:955px;top:787px;" width="12" height="12" viewBox="0 0 12 12"><circle cx="6" cy="6" r="4.5" fill="none" stroke="#777" stroke-width="1.2"/></svg>
<div class="a" style="left:494px;top:804px;width:474px;height:22px;background:#3a3a3a;"></div>
<div class="a" style="left:540px;top:808px;width:428px;height:18px;background:#4b4e3d;border-radius:3px;"></div>
<div class="a" style="left:496px;top:806px;width:18px;height:18px;background:#2a2a2a;border-radius:2px;"></div>
<div class="a" style="left:515px;top:806px;width:18px;height:18px;background:#2a2a2a;border-radius:2px;"></div>
<svg class="a" style="left:515px;top:806px;" width="18" height="18" viewBox="0 0 18 18"><path d="M13.2 7.2A5 5 0 1 1 10.5 4.7" stroke="#d8d8d8" stroke-width="1.1" fill="none"/><path d="M6 9l2.5 2.5L14.5 5" stroke="#e0e0e0" stroke-width="1.5" fill="none"/></svg>
<div class="a" style="left:573px;top:807px;width:16px;height:16px;background:#c9ea74;border-radius:2px;"></div>
<svg class="a" style="left:593px;top:809px;" width="15" height="12" viewBox="0 0 15 12"><path d="M1 6l4-4h9v8H5z" fill="#ccc"/><circle cx="6" cy="6" r="1.5" fill="#3a3a3a"/></svg>
<svg class="a" style="left:649px;top:807px;" width="16" height="16" viewBox="0 0 16 16"><path d="M2 2v13h13" stroke="#ddd" stroke-width="1.1" fill="none"/><path d="M2 15l9-7" stroke="#ddd" stroke-width="1.1"/><path d="M0 4l2-2 2 2" stroke="#8c8" fill="none"/><path d="M13 13l2 2-2 2" stroke="#8c8" fill="none"/><path d="M8 8h3v3" stroke="#8c8" fill="none"/></svg>
<div class="a t" style="left:667px;top:808px;height:16px;line-height:16px;font-size:12px;color:#ececec;">3D Matrix [Duplicator]</div>
<div class="a" style="left:930px;top:807px;width:21px;height:16px;background:#2e2e2e;border-radius:3px;"></div>
<div class="a" style="left:940px;top:807px;width:1px;height:16px;background:#262626;"></div>
<svg class="a" style="left:930px;top:807px;" width="21" height="16" viewBox="0 0 21 16"><path d="M2 8L5 4.8H8.2V11.2H5Z" fill="#d9c070"/><path d="M12.8 4.8H16L19.2 8L16 11.2H12.8Z" fill="#c050f0"/></svg>
<svg class="a" style="left:955px;top:809px;" width="12" height="12" viewBox="0 0 12 12"><circle cx="6" cy="6" r="4.5" fill="none" stroke="#777" stroke-width="1.2"/></svg>
<div class="a" style="left:496px;top:828px;width:18px;height:18px;background:#2a2a2a;border-radius:2px;"></div>
<div class="a" style="left:515px;top:828px;width:18px;height:18px;background:#2a2a2a;border-radius:2px;"></div>
<div class="a" style="left:534px;top:828px;width:18px;height:18px;background:#2a2a2a;border-radius:2px;"></div>
<svg class="a" style="left:515px;top:828px;" width="18" height="18" viewBox="0 0 18 18"><ellipse cx="9" cy="9" rx="6.5" ry="3.8" fill="none" stroke="#ddd" stroke-width="1.2"/><circle cx="9" cy="9" r="2" fill="#ddd"/></svg>
<div class="a" style="left:573px;top:829px;width:16px;height:16px;background:#ffe07a;border-radius:2px;"></div>
<svg class="a" style="left:593px;top:831px;" width="15" height="12" viewBox="0 0 15 12"><path d="M1 6l4-4h9v8H5z" fill="#ccc"/><circle cx="6" cy="6" r="1.5" fill="#3a3a3a"/></svg>
<svg class="a" style="left:649px;top:829px;" width="16" height="16" viewBox="0 0 16 16"><rect x="1" y="2" width="2" height="2" fill="#e8d070"/><rect x="1" y="7" width="2" height="2" fill="#e8d070"/><rect x="1" y="12" width="2" height="2" fill="#e8d070"/><rect x="6" y="2" width="2" height="2" fill="#e8d070"/><rect x="6" y="7" width="2" height="2" fill="#e8d070"/><rect x="6" y="12" width="2" height="2" fill="#e8d070"/><rect x="11" y="2" width="2" height="2" fill="#e8d070"/><rect x="11" y="7" width="2" height="2" fill="#e8d070"/><rect x="11" y="12" width="2" height="2" fill="#e8d070"/></svg>
<div class="a t" style="left:667px;top:830px;height:16px;line-height:16px;font-size:12px;color:#ececec;">Duplicator</div>
<div class="a" style="left:930px;top:829px;width:21px;height:16px;background:#2e2e2e;border-radius:3px;"></div>
<div class="a" style="left:940px;top:829px;width:1px;height:16px;background:#262626;"></div>
<svg class="a" style="left:930px;top:829px;" width="21" height="16" viewBox="0 0 21 16"><path d="M2 8L5 4.8H8.2V11.2H5Z" fill="#d9c070"/><path d="M12.8 4.8H16L19.2 8L16 11.2H12.8Z" fill="#c050f0"/></svg>
<div class="a" style="left:930px;top:829px;width:10px;height:16px;border:1px solid #8a7a40;box-sizing:border-box;border-radius:1px;"></div>
<svg class="a" style="left:955px;top:831px;" width="12" height="12" viewBox="0 0 12 12"><circle cx="6" cy="6" r="4.5" fill="none" stroke="#777" stroke-width="1.2"/></svg>
<div class="a" style="left:496px;top:850px;width:18px;height:18px;background:#2a2a2a;border-radius:2px;"></div>
<div class="a" style="left:515px;top:850px;width:18px;height:18px;background:#2a2a2a;border-radius:2px;"></div>
<div class="a" style="left:534px;top:850px;width:18px;height:18px;background:#2a2a2a;border-radius:2px;"></div>
<div class="a" style="left:573px;top:851px;width:16px;height:16px;background:#ffe07a;border-radius:2px;"></div>
<svg class="a" style="left:593px;top:853px;" width="15" height="12" viewBox="0 0 15 12"><path d="M1 6l4-4h9v8H5z" fill="#ccc"/><circle cx="6" cy="6" r="1.5" fill="#3a3a3a"/></svg>
<div class="a" style="left:610px;top:850px;width:15px;height:18px;background:#333;border-radius:2px;"></div>
<div class="a" style="left:626px;top:850px;width:15px;height:18px;background:#303030;border-radius:2px;"></div>
<svg class="a" style="left:613px;top:856px;" width="10" height="6" viewBox="0 0 10 6"><path d="M1 1l4 4 4-4" stroke="#888" fill="none" stroke-width="1"/></svg>
<svg class="a" style="left:649px;top:851px;" width="16" height="16" viewBox="0 0 16 16"><rect x="1.5" y="2.5" width="13" height="12" fill="none" stroke="#e8d070" stroke-width="1.3" stroke-dasharray="3 2"/></svg>
<div class="a t" style="left:667px;top:852px;height:16px;line-height:16px;font-size:12px;color:#a8a8a8;">Ellipse Shape</div>
<div class="a" style="left:930px;top:851px;width:21px;height:16px;background:#2e2e2e;border-radius:3px;"></div>
<div class="a" style="left:940px;top:851px;width:1px;height:16px;background:#262626;"></div>
<svg class="a" style="left:930px;top:851px;" width="21" height="16" viewBox="0 0 21 16"><path d="M2 8L5 4.8H8.2V11.2H5Z" fill="#d9c070"/><path d="M12.8 4.8H16L19.2 8L16 11.2H12.8Z" fill="#c050f0"/></svg>
<svg class="a" style="left:955px;top:853px;" width="12" height="12" viewBox="0 0 12 12"><circle cx="6" cy="6" r="4.5" fill="none" stroke="#777" stroke-width="1.2"/></svg>
<div class="a" style="left:496px;top:872px;width:18px;height:18px;background:#2a2a2a;border-radius:2px;"></div>
<div class="a" style="left:515px;top:872px;width:18px;height:18px;background:#2a2a2a;border-radius:2px;"></div>
<div class="a" style="left:534px;top:872px;width:18px;height:18px;background:#2a2a2a;border-radius:2px;"></div>
<svg class="a" style="left:515px;top:872px;" width="18" height="18" viewBox="0 0 18 18"><ellipse cx="9" cy="9" rx="6.5" ry="3.8" fill="none" stroke="#555" stroke-width="1.2"/><circle cx="9" cy="9" r="2" fill="#555"/></svg>
<div class="a" style="left:573px;top:873px;width:16px;height:16px;background:#b98cff;border-radius:2px;"></div>
<svg class="a" style="left:593px;top:875px;" width="15" height="12" viewBox="0 0 15 12"><path d="M1 6l4-4h9v8H5z" fill="#ccc"/><circle cx="6" cy="6" r="1.5" fill="#3a3a3a"/></svg>
<svg class="a" style="left:668px;top:873px;" width="16" height="16" viewBox="0 0 16 16"><rect x="1" y="1" width="14" height="14" fill="none" stroke="#ccc" stroke-dasharray="2 1.5"/><path d="M4 4h8v2.5h-2.7V13H6.7V6.5H4z" fill="#e8d070"/></svg>
<div class="a t" style="left:686px;top:874px;height:16px;line-height:16px;font-size:12px;color:#a8a8a8;">Cavalry</div>
<div class="a" style="left:930px;top:873px;width:21px;height:16px;background:#2e2e2e;border-radius:3px;"></div>
<div class="a" style="left:940px;top:873px;width:1px;height:16px;background:#262626;"></div>
<svg class="a" style="left:930px;top:873px;" width="21" height="16" viewBox="0 0 21 16"><path d="M2 8L5 4.8H8.2V11.2H5Z" fill="#d9c070"/><path d="M12.8 4.8H16L19.2 8L16 11.2H12.8Z" fill="#777"/></svg>
<svg class="a" style="left:955px;top:875px;" width="12" height="12" viewBox="0 0 12 12"><circle cx="6" cy="6" r="4.5" fill="none" stroke="#777" stroke-width="1.2"/></svg>
<div class="a" style="left:972px;top:673px;width:10px;height:290px;background:#4a4a4a;border-radius:5px;"></div>
<div class="a" style="left:538px;top:800px;width:440px;height:31px;border:3px solid #b4e61e;box-sizing:border-box;"></div>
<div class="a" style="left:494px;top:962px;width:490px;height:14px;background:#2e2e2e;"></div>
<div class="a" style="left:495px;top:964px;width:474px;height:10px;background:#4e4e4e;border-radius:5px;"></div>
<div class="a" style="left:984px;top:630px;width:4px;height:346px;background:#262626;"></div>
<div class="a" style="left:986px;top:807px;width:2px;height:2px;background:#777;"></div>
<div class="a" style="left:986px;top:811px;width:2px;height:2px;background:#777;"></div>
<div class="a" style="left:986px;top:815px;width:2px;height:2px;background:#777;"></div>
<div class="a" style="left:986px;top:819px;width:2px;height:2px;background:#777;"></div>
<div class="a" style="left:986px;top:823px;width:2px;height:2px;background:#777;"></div>
<div class="a" style="left:988px;top:630px;width:926px;height:346px;background:#1e1e1e;"></div>
<div class="a" style="left:991px;top:630px;width:914px;height:24px;background:#222;"></div>
<svg class="a" style="left:991px;top:630px;" width="914" height="24" viewBox="0 0 914 24"><rect x="6.05" y="16" width="1.5" height="8" fill="#9a9a9a"/><rect x="16.94" y="20" width="1.5" height="4" fill="#8a8a8a"/><rect x="27.82" y="20" width="1.5" height="4" fill="#8a8a8a"/><rect x="38.71" y="20" width="1.5" height="4" fill="#8a8a8a"/><rect x="49.60" y="20" width="1.5" height="4" fill="#8a8a8a"/><rect x="60.48" y="16" width="1.5" height="8" fill="#9a9a9a"/><rect x="71.37" y="20" width="1.5" height="4" fill="#8a8a8a"/><rect x="82.26" y="20" width="1.5" height="4" fill="#8a8a8a"/><rect x="93.14" y="20" width="1.5" height="4" fill="#8a8a8a"/><rect x="104.03" y="20" width="1.5" height="4" fill="#8a8a8a"/><rect x="114.92" y="16" width="1.5" height="8" fill="#9a9a9a"/><rect x="125.81" y="20" width="1.5" height="4" fill="#8a8a8a"/><rect x="136.69" y="20" width="1.5" height="4" fill="#8a8a8a"/><rect x="147.58" y="20" width="1.5" height="4" fill="#8a8a8a"/><rect x="158.47" y="20" width="1.5" height="4" fill="#8a8a8a"/><rect x="169.35" y="16" width="1.5" height="8" fill="#9a9a9a"/><rect x="180.24" y="20" width="1.5" height="4" fill="#8a8a8a"/><rect x="191.13" y="20" width="1.5" height="4" fill="#8a8a8a"/><rect x="202.01" y="20" width="1.5" height="4" fill="#8a8a8a"/><rect x="212.90" y="20" width="1.5" height="4" fill="#8a8a8a"/><rect x="223.79" y="16" width="1.5" height="8" fill="#9a9a9a"/><rect x="234.67" y="20" width="1.5" height="4" fill="#8a8a8a"/><rect x="245.56" y="20" width="1.5" height="4" fill="#8a8a8a"/><rect x="256.45" y="20" width="1.5" height="4" fill="#8a8a8a"/><rect x="267.34" y="20" width="1.5" height="4" fill="#8a8a8a"/><rect x="278.22" y="16" width="1.5" height="8" fill="#9a9a9a"/><rect x="289.11" y="20" width="1.5" height="4" fill="#8a8a8a"/><rect x="300.00" y="20" width="1.5" height="4" fill="#8a8a8a"/><rect x="310.88" y="20" width="1.5" height="4" fill="#8a8a8a"/><rect x="321.77" y="20" width="1.5" height="4" fill="#8a8a8a"/><rect x="332.66" y="16" width="1.5" height="8" fill="#9a9a9a"/><rect x="343.54" y="20" width="1.5" height="4" fill="#8a8a8a"/><rect x="354.43" y="20" width="1.5" height="4" fill="#8a8a8a"/><rect x="365.32" y="20" width="1.5" height="4" fill="#8a8a8a"/><rect x="376.20" y="20" width="1.5" height="4" fill="#8a8a8a"/><rect x="387.09" y="16" width="1.5" height="8" fill="#9a9a9a"/><rect x="397.98" y="20" width="1.5" height="4" fill="#8a8a8a"/><rect x="408.86" y="20" width="1.5" height="4" fill="#8a8a8a"/><rect x="419.75" y="20" width="1.5" height="4" fill="#8a8a8a"/><rect x="430.64" y="20" width="1.5" height="4" fill="#8a8a8a"/><rect x="441.53" y="16" width="1.5" height="8" fill="#9a9a9a"/><rect x="452.41" y="20" width="1.5" height="4" fill="#8a8a8a"/><rect x="463.30" y="20" width="1.5" height="4" fill="#8a8a8a"/><rect x="474.19" y="20" width="1.5" height="4" fill="#8a8a8a"/><rect x="485.07" y="20" width="1.5" height="4" fill="#8a8a8a"/><rect x="495.96" y="16" width="1.5" height="8" fill="#9a9a9a"/><rect x="506.85" y="20" width="1.5" height="4" fill="#8a8a8a"/><rect x="517.73" y="20" width="1.5" height="4" fill="#8a8a8a"/><rect x="528.62" y="20" width="1.5" height="4" fill="#8a8a8a"/><rect x="539.51" y="20" width="1.5" height="4" fill="#8a8a8a"/><rect x="550.39" y="16" width="1.5" height="8" fill="#9a9a9a"/><rect x="561.28" y="20" width="1.5" height="4" fill="#8a8a8a"/><rect x="572.17" y="20" width="1.5" height="4" fill="#8a8a8a"/><rect x="583.05" y="20" width="1.5" height="4" fill="#8a8a8a"/><rect x="593.94" y="20" width="1.5" height="4" fill="#8a8a8a"/><rect x="604.83" y="16" width="1.5" height="8" fill="#9a9a9a"/><rect x="615.72" y="20" width="1.5" height="4" fill="#8a8a8a"/><rect x="626.60" y="20" width="1.5" height="4" fill="#8a8a8a"/><rect x="637.49" y="20" width="1.5" height="4" fill="#8a8a8a"/><rect x="648.38" y="20" width="1.5" height="4" fill="#8a8a8a"/><rect x="659.26" y="16" width="1.5" height="8" fill="#9a9a9a"/><rect x="670.15" y="20" width="1.5" height="4" fill="#8a8a8a"/><rect x="681.04" y="20" width="1.5" height="4" fill="#8a8a8a"/><rect x="691.92" y="20" width="1.5" height="4" fill="#8a8a8a"/><rect x="702.81" y="20" width="1.5" height="4" fill="#8a8a8a"/><rect x="713.70" y="16" width="1.5" height="8" fill="#9a9a9a"/><rect x="724.58" y="20" width="1.5" height="4" fill="#8a8a8a"/><rect x="735.47" y="20" width="1.5" height="4" fill="#8a8a8a"/><rect x="746.36" y="20" width="1.5" height="4" fill="#8a8a8a"/><rect x="757.24" y="20" width="1.5" height="4" fill="#8a8a8a"/><rect x="768.13" y="16" width="1.5" height="8" fill="#9a9a9a"/><rect x="779.02" y="20" width="1.5" height="4" fill="#8a8a8a"/><rect x="789.91" y="20" width="1.5" height="4" fill="#8a8a8a"/><rect x="800.79" y="20" width="1.5" height="4" fill="#8a8a8a"/><rect x="811.68" y="20" width="1.5" height="4" fill="#8a8a8a"/><rect x="822.57" y="16" width="1.5" height="8" fill="#9a9a9a"/><rect x="833.45" y="20" width="1.5" height="4" fill="#8a8a8a"/><rect x="844.34" y="20" width="1.5" height="4" fill="#8a8a8a"/><rect x="855.23" y="20" width="1.5" height="4" fill="#8a8a8a"/><rect x="866.11" y="20" width="1.5" height="4" fill="#8a8a8a"/><rect x="877.00" y="16" width="1.5" height="8" fill="#9a9a9a"/><rect x="887.89" y="20" width="1.5" height="4" fill="#8a8a8a"/><rect x="898.77" y="20" width="1.5" height="4" fill="#8a8a8a"/><rect x="909.66" y="20" width="1.5" height="4" fill="#8a8a8a"/></svg>
<div class="a t" style="left:977.8px;top:631px;height:16px;line-height:16px;font-size:12.5px;color:#dedede;width:40px;text-align:center;">0</div>
<div class="a t" style="left:1032.234375px;top:631px;height:16px;line-height:16px;font-size:12.5px;color:#dedede;width:40px;text-align:center;">15</div>
<div class="a t" style="left:1086.66875px;top:631px;height:16px;line-height:16px;font-size:12.5px;color:#dedede;width:40px;text-align:center;">30</div>
<div class="a t" style="left:1141.103125px;top:631px;height:16px;line-height:16px;font-size:12.5px;color:#dedede;width:40px;text-align:center;">45</div>
<div class="a t" style="left:1195.5375px;top:631px;height:16px;line-height:16px;font-size:12.5px;color:#dedede;width:40px;text-align:center;">60</div>
<div class="a t" style="left:1249.971875px;top:631px;height:16px;line-height:16px;font-size:12.5px;color:#dedede;width:40px;text-align:center;">75</div>
<div class="a t" style="left:1304.40625px;top:631px;height:16px;line-height:16px;font-size:12.5px;color:#dedede;width:40px;text-align:center;">90</div>
<div class="a t" style="left:1358.840625px;top:631px;height:16px;line-height:16px;font-size:12.5px;color:#dedede;width:40px;text-align:center;">105</div>
<div class="a t" style="left:1413.275px;top:631px;height:16px;line-height:16px;font-size:12.5px;color:#dedede;width:40px;text-align:center;">120</div>
<div class="a t" style="left:1467.709375px;top:631px;height:16px;line-height:16px;font-size:12.5px;color:#dedede;width:40px;text-align:center;">135</div>
<div class="a t" style="left:1522.1437500000002px;top:631px;height:16px;line-height:16px;font-size:12.5px;color:#dedede;width:40px;text-align:center;">150</div>
<div class="a t" style="left:1576.578125px;top:631px;height:16px;line-height:16px;font-size:12.5px;color:#dedede;width:40px;text-align:center;">165</div>
<div class="a t" style="left:1631.0125px;top:631px;height:16px;line-height:16px;font-size:12.5px;color:#dedede;width:40px;text-align:center;">180</div>
<div class="a t" style="left:1685.446875px;top:631px;height:16px;line-height:16px;font-size:12.5px;color:#dedede;width:40px;text-align:center;">195</div>
<div class="a t" style="left:1739.88125px;top:631px;height:16px;line-height:16px;font-size:12.5px;color:#dedede;width:40px;text-align:center;">210</div>
<div class="a t" style="left:1794.3156250000002px;top:631px;height:16px;line-height:16px;font-size:12.5px;color:#dedede;width:40px;text-align:center;">225</div>
<div class="a t" style="left:1848.75px;top:631px;height:16px;line-height:16px;font-size:12.5px;color:#dedede;width:40px;text-align:center;">240</div>
<div class="a" style="left:991px;top:654px;width:914px;height:17px;background:#464646;"></div>
<div class="a" style="left:995px;top:654px;width:5px;height:17px;background:#72c7ac;border-radius:1px;"></div>
<div class="a" style="left:1905px;top:652px;width:5px;height:19px;background:#72c7ac;border-radius:1px;"></div>
<div class="a" style="left:1000px;top:672px;width:905px;height:220px;background:#222;"></div>
<div class="a" style="left:1000px;top:892px;width:905px;height:70px;background:#2a2a2a;"></div>
<div class="a" style="left:991px;top:674px;width:9px;height:18px;background:#242424;"></div>
<div class="a" style="left:1000px;top:674px;width:905px;height:18px;background:repeating-linear-gradient(130deg,#66d596 0px,#66d596 12px,#8af0b4 12px,#8af0b4 13.5px,#78e3a2 13.5px,#78e3a2 24.8px,#8af0b4 24.8px,#8af0b4 26px);border-radius:3px 0 0 3px;"></div>
<div class="a t" style="left:1008px;top:675px;height:16px;line-height:16px;font-size:12px;color:#1a1a1a;">Color Array</div>
<div class="a" style="left:1000px;top:696px;width:905px;height:18px;background:repeating-linear-gradient(130deg,#c3e06e 0px,#c3e06e 12px,#e0f790 12px,#e0f790 13.5px,#d2ee80 13.5px,#d2ee80 24.8px,#e0f790 24.8px,#e0f790 26px);border-radius:3px 0 0 3px;"></div>
<div class="a t" style="left:1008px;top:697px;height:16px;line-height:16px;font-size:12px;color:#1a1a1a;">Random [Index]</div>
<div class="a" style="left:1000px;top:718px;width:905px;height:18px;background:repeating-linear-gradient(130deg,#c3e06e 0px,#c3e06e 12px,#e0f790 12px,#e0f790 13.5px,#d2ee80 13.5px,#d2ee80 24.8px,#e0f790 24.8px,#e0f790 26px);border-radius:3px 0 0 3px;"></div>
<div class="a t" style="left:1008px;top:719px;height:16px;line-height:16px;font-size:12px;color:#1a1a1a;">Oscillator [Position.Z] Cosine</div>
<div class="a" style="left:1000px;top:740px;width:905px;height:18px;background:repeating-linear-gradient(130deg,#c3e06e 0px,#c3e06e 12px,#e0f790 12px,#e0f790 13.5px,#d2ee80 13.5px,#d2ee80 24.8px,#e0f790 24.8px,#e0f790 26px);border-radius:3px 0 0 3px;"></div>
<div class="a t" style="left:1008px;top:741px;height:16px;line-height:16px;font-size:12px;color:#1a1a1a;">Oscillator [Position.X] Sine Driver</div>
<div class="a" style="left:1000px;top:762px;width:905px;height:18px;background:repeating-linear-gradient(130deg,#5a86d8 0px,#5a86d8 12px,#76a4f0 12px,#76a4f0 13.5px,#6592e4 13.5px,#6592e4 24.8px,#76a4f0 24.8px,#76a4f0 26px);border-radius:3px 0 0 3px;"></div>
<div class="a t" style="left:1008px;top:763px;height:16px;line-height:16px;font-size:12px;color:#f2f2f2;">Index Context [Number]</div>
<div class="a" style="left:1000px;top:784px;width:905px;height:18px;background:repeating-linear-gradient(130deg,#5a86d8 0px,#5a86d8 12px,#76a4f0 12px,#76a4f0 13.5px,#6592e4 13.5px,#6592e4 24.8px,#76a4f0 24.8px,#76a4f0 26px);border-radius:3px 0 0 3px;"></div>
<div class="a t" style="left:1008px;top:785px;height:16px;line-height:16px;font-size:12px;color:#f2f2f2;">String Generator [String]</div>
<div class="a" style="left:1000px;top:806px;width:905px;height:18px;background-color:#e2f8a8;background-image:radial-gradient(circle,#a6cc6a 1px,transparent 1.5px);background-size:4px 4px;border:1px solid #f4f4f4;box-sizing:border-box;"></div>
<div class="a t" style="left:1008px;top:807px;height:16px;line-height:16px;font-size:12px;color:#2a3a1a;">3D Matrix [Duplicator]</div>
<div class="a" style="left:1000px;top:828px;width:905px;height:18px;background:#ffe27a;border-radius:4px 0 0 4px;"></div>
<div class="a t" style="left:1008px;top:829px;height:16px;line-height:16px;font-size:12px;color:#1a1a1a;">Duplicator</div>
<div class="a" style="left:1000px;top:850px;width:905px;height:18px;background:#ffe27a;border-radius:4px 0 0 4px;"></div>
<div class="a t" style="left:1008px;top:851px;height:16px;line-height:16px;font-size:12px;color:#1a1a1a;">Ellipse Shape</div>
<div class="a" style="left:1000px;top:872px;width:905px;height:18px;background:#b68cf6;border-radius:4px 0 0 4px;"></div>
<div class="a t" style="left:1008px;top:873px;height:16px;line-height:16px;font-size:12px;color:#f2f2f2;">Cavalry</div>
<div class="a" style="left:1553px;top:653px;width:2px;height:309px;background:#6cc4a8;"></div>
<svg class="a" style="left:1546px;top:644px;" width="16" height="10" viewBox="0 0 16 10"><path d="M0 0h16l-8 9z" fill="#6cc4a8"/></svg>
<div class="a" style="left:1905px;top:672px;width:9px;height:290px;background:#222;"></div>
<div class="a" style="left:988px;top:962px;width:926px;height:14px;background:#2e2e2e;"></div>
<div class="a" style="left:992px;top:964px;width:921px;height:10px;background:#4e4e4e;border-radius:5px;"></div>
<div class="a" style="left:494px;top:976px;width:490px;height:22px;background:#444;"></div>
<div class="a" style="left:497px;top:978px;width:20px;height:20px;background:#333;border-radius:3px;border:1px solid #262626;box-sizing:border-box;"></div>
<svg class="a" style="left:497px;top:978px;" width="20" height="20" viewBox="0 0 20 20"><path d="M3 10l4-4h10v8H7z" fill="#ccc"/><circle cx="8" cy="10" r="1.5" fill="#333"/></svg>
<div class="a t" style="left:520px;top:980px;height:16px;line-height:16px;font-size:12px;color:#e6e6e6;">1 selected</div>
<div class="a" style="left:776px;top:978px;width:19px;height:19px;background:#333;border-radius:3px;border:1px solid #262626;box-sizing:border-box;"></div>
<svg class="a" style="left:776px;top:978px;" width="19" height="19" viewBox="0 0 19 19"><rect x="4" y="4" width="11" height="11" fill="none" stroke="#ddd" stroke-width="1.2"/><rect x="8" y="8" width="3" height="3" fill="#ddd"/></svg>
<div class="a" style="left:798px;top:979px;width:185px;height:18px;background:#555;border-radius:3px;"></div>
<div class="a" style="left:799px;top:980px;width:87px;height:16px;background:#2a2a2a;border-radius:3px;"></div>
<svg class="a" style="left:805px;top:981px;" width="16" height="14" viewBox="0 0 16 14"><path d="M3 2h9M5 7h9M3 12h9" stroke="#3ec56a" stroke-width="2"/></svg>
<div class="a t" style="left:821px;top:981px;height:16px;line-height:16px;font-size:12px;color:#ececec;">Time Editor</div>
<svg class="a" style="left:892px;top:981px;" width="16" height="14" viewBox="0 0 16 14"><path d="M2 1v12h13" stroke="#bbb" stroke-width="1" fill="none"/><path d="M3 12l4-6 7-3" stroke="#bbb" fill="none"/></svg>
<div class="a t" style="left:910px;top:981px;height:16px;line-height:16px;font-size:12px;color:#ececec;">Graph Editor</div>
<div class="a" style="left:984px;top:976px;width:4px;height:22px;background:#262626;"></div>
<div class="a" style="left:988px;top:976px;width:926px;height:22px;background:#444;"></div>
<div class="a" style="left:994px;top:978px;width:19px;height:19px;background:#333;border-radius:3px;border:1px solid #262626;box-sizing:border-box;"></div>
<svg class="a" style="left:994px;top:978px;" width="19" height="19" viewBox="0 0 19 19"><path d="M3 4h13M3 8h10M3 12h4M9 12h5" stroke="#ddd" stroke-width="1.6"/><path d="M14 17l3-3v3z" fill="#5c9"/></svg>
<div class="a" style="left:1015px;top:979px;width:150px;height:18px;background:#2a2a2a;border-radius:2px;"></div>
<div class="a t" style="left:1017px;top:981px;height:16px;line-height:16px;font-size:12px;color:#ececec;">Default Keyframe Layer</div>
<div class="a" style="left:1171px;top:979px;width:70px;height:18px;background:#2a2a2a;border-radius:2px;"></div>
<div class="a t" style="left:1176px;top:981px;height:16px;line-height:16px;font-size:12px;color:#555;">F</div>
<div class="a t" style="left:1188px;top:981px;height:16px;line-height:16px;font-size:12px;color:#ccc;">-</div>
<div class="a t" style="left:1247px;top:981px;height:16px;line-height:16px;font-size:12px;color:#e6e6e6;">Align:</div>
<div class="a" style="left:1284px;top:978px;width:53px;height:19px;background:#2c2c2c;border-radius:3px;border:1px solid #222;box-sizing:border-box;"></div>
<svg class="a" style="left:1284px;top:978px;" width="53" height="19" viewBox="0 0 53 19"><path d="M3 3v13M50 3v13M26 2v15" stroke="#ddd"/><path d="M5 6h4M5 12h4M23 6h6M22 12h8M44 6h4M44 12h4" stroke="#ddd" stroke-width="1.5"/></svg>
<div class="a" style="left:1340px;top:978px;width:18px;height:19px;background:#333;border-radius:3px;border:1px solid #262626;box-sizing:border-box;"></div>
<svg class="a" style="left:1340px;top:978px;" width="18" height="19" viewBox="0 0 18 19"><rect x="3" y="3" width="12" height="12" fill="none" stroke="#ccc" stroke-dasharray="2 2"/><rect x="7" y="8" width="3" height="3" fill="#ccc"/></svg>
<div class="a" style="left:1362px;top:978px;width:31px;height:19px;background:#333;border-radius:3px;border:1px solid #262626;box-sizing:border-box;"></div>
<svg class="a" style="left:1362px;top:978px;" width="31" height="19" viewBox="0 0 31 19"><path d="M4 11V8a5 5 0 0 1 10 0v3" stroke="#ccc" stroke-width="2.5" fill="none"/><path d="M22.5 6.5v6l5-3z" fill="none" stroke="#999"/></svg>
<div class="a" style="left:1379px;top:979px;width:1px;height:17px;background:#262626;"></div>
<div class="a" style="left:1396px;top:978px;width:33px;height:19px;background:#333;border-radius:3px;border:1px solid #262626;box-sizing:border-box;"></div>
<svg class="a" style="left:1396px;top:978px;" width="33" height="19" viewBox="0 0 33 19"><path d="M2 10h14M7 5v10M11 7v6" stroke="#ccc" stroke-width="1.2"/><path d="M24.5 6.5v6l5-3z" fill="none" stroke="#999"/></svg>
<div class="a" style="left:1414px;top:979px;width:1px;height:17px;background:#262626;"></div>
<svg class="a" style="left:1742px;top:980px;" width="16" height="16" viewBox="0 0 16 16"><circle cx="7" cy="7" r="5.5" fill="none" stroke="#ccc" stroke-width="1.2"/><path d="M4.5 7h5" stroke="#ccc" stroke-width="1.2"/><path d="M11 11l3 3" stroke="#ccc" stroke-width="1.8"/></svg>
<div class="a" style="left:1767px;top:985px;width:116px;height:5px;background:#555;border-radius:3px;"></div>
<svg class="a" style="left:1761px;top:981px;" width="12" height="12" viewBox="0 0 12 12"><circle cx="6" cy="6" r="5" fill="#6fc4a4"/><circle cx="6" cy="6" r="2" fill="#5aa88a"/></svg>
<svg class="a" style="left:1886px;top:980px;" width="16" height="16" viewBox="0 0 16 16"><circle cx="7" cy="7" r="5.5" fill="none" stroke="#ccc" stroke-width="1.2"/><path d="M4.5 7h5M7 4.5v5" stroke="#ccc" stroke-width="1.2"/><path d="M11 11l3 3" stroke="#ccc" stroke-width="1.8"/></svg>
<div class="a" style="left:494px;top:998px;width:1420px;height:6px;background:#141414;"></div>
<div class="a" style="left:494px;top:1004px;width:1420px;height:22px;background:#3a3a3a;"></div>
<div class="a" style="left:498px;top:1010px;width:2px;height:2px;background:#777;"></div>
<div class="a" style="left:498px;top:1014px;width:2px;height:2px;background:#777;"></div>
<div class="a" style="left:498px;top:1018px;width:2px;height:2px;background:#777;"></div>
<div class="a" style="left:507px;top:1005px;width:17px;height:19px;background:#333;border-radius:3px;border:1px solid #262626;box-sizing:border-box;"></div>
<svg class="a" style="left:507px;top:1005px;" width="17" height="19" viewBox="0 0 17 19"><path d="M3 3h11v8H9l-2 3v-3H3z" fill="#ddd"/><path d="M5 5.5h7M5 8h7" stroke="#333"/></svg>
<div class="a" style="left:528px;top:1007px;width:18px;height:15px;background:#2ecc71;border-radius:2px;"></div>
<div class="a t" style="left:528.0px;top:1008px;height:16px;line-height:16px;font-size:12px;color:#111;width:18px;text-align:center;">0</div>
<svg class="a" style="left:552px;top:1011px;" width="8" height="8" viewBox="0 0 8 8"><circle cx="4" cy="4" r="3" fill="#2ecc71"/></svg>
<div class="a t" style="left:565px;top:1008px;height:16px;line-height:16px;font-size:12px;color:#ececec;">Connected: <span style="color:#d77ff0">Oscillator [Position.X] Sine Driver</span> to <span style="color:#d8c070">Oscillator [Position.Z] Cosine.</span></div>
<div class="a" style="left:1610px;top:1006px;width:80px;height:18px;background:#d7be6e;border-radius:2px;"></div>
<div class="a t" style="left:1616px;top:1008px;height:16px;line-height:16px;font-size:12px;color:#3a3020;">Feedback</div>
<svg class="a" style="left:1671px;top:1007px;" width="14" height="16" viewBox="0 0 14 16"><rect x="1" y="1" width="11" height="14" fill="#f4f4f4"/><path d="M5 12l6-7 2 2-6 7z" fill="#f08040"/></svg>
<div class="a" style="left:1693px;top:1006px;width:109px;height:18px;background:#2ecc71;border-radius:2px;"></div>
<div class="a t" style="left:1698px;top:1008px;height:16px;line-height:16px;font-size:12px;color:#102818;">Upgrade to Pro</div>
<svg class="a" style="left:1781px;top:1008px;" width="16" height="14" viewBox="0 0 16 14"><circle cx="4.5" cy="9" r="4" fill="#f5c020"/><circle cx="11.5" cy="9" r="4" fill="#f5c020"/></svg>
<div class="a" style="left:1805px;top:1006px;width:106px;height:18px;background:#3daee9;border-radius:2px;"></div>
<div class="a t" style="left:1810px;top:1008px;height:16px;line-height:16px;font-size:12px;color:#141e3a;">Tips and Tricks</div>
<svg class="a" style="left:1888px;top:1007px;" width="16" height="16" viewBox="0 0 16 16"><path d="M4 12l8-8 2 0 0 2-8 8z" fill="#f4f4f4"/><path d="M4 12l-2 2 1-3z" fill="#f06030"/><circle cx="10" cy="6" r="1.3" fill="#5aa0e0"/><path d="M9 3h3M13 7v3" stroke="#e03050" stroke-width="2"/></svg>
<div class="a" style="left:0px;top:1026px;width:1920px;height:6px;background:#1c1c1c;"></div>
</body></html>
